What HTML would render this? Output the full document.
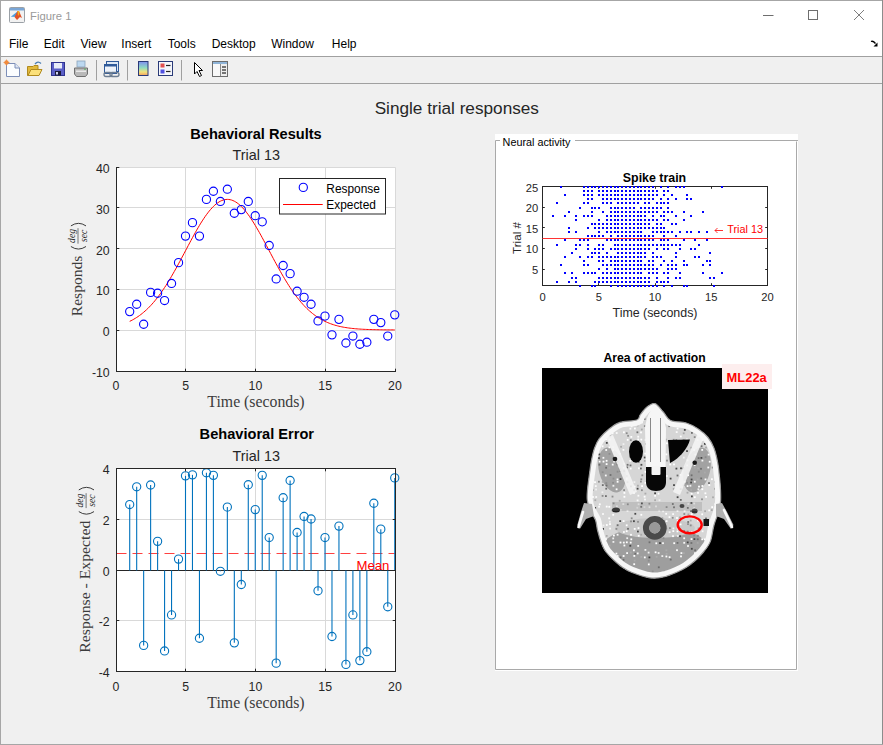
<!DOCTYPE html>
<html><head><meta charset="utf-8"><style>
html,body{margin:0;padding:0;background:#f0f0f0;overflow:hidden}
svg{display:block}
</style></head><body>
<svg width="883" height="745" viewBox="0 0 883 745">
<rect x="0.00" y="0.00" width="883.00" height="745.00" fill="#f0f0f0" />
<rect x="0.00" y="0.00" width="883.00" height="56.00" fill="#ffffff" />
<line x1="0.00" y1="0.50" x2="883.00" y2="0.50" stroke="#a6a6a6" stroke-width="1" />
<line x1="0.50" y1="0.00" x2="0.50" y2="745.00" stroke="#a6a6a6" stroke-width="1" />
<line x1="882.50" y1="0.00" x2="882.50" y2="745.00" stroke="#8c8c8c" stroke-width="1" />
<line x1="0.00" y1="744.50" x2="883.00" y2="744.50" stroke="#a6a6a6" stroke-width="1" />
<text x="30.00" y="20.00" font-size="11.3" text-anchor="start" fill="#9a9a9a" font-weight="normal" font-family='"Liberation Sans", sans-serif' >Figure 1</text>
<g transform="translate(9,7)"><rect x="0.5" y="0.5" width="15" height="15" rx="1" fill="#f2f2f2" stroke="#9aa0a6"/><rect x="1" y="1" width="14" height="2.5" fill="#7aa6d6"/><path d="M1.8 9.8 L8.5 4.5 L9.5 10 Z" fill="#4a9ee0"/><path d="M5.5 10 L8.5 4 L10 4 L13 11 L11 10 L8 13 Z" fill="#e0522a"/><path d="M8.5 4 L10 4 L10.5 7 L9 9 Z" fill="#f5b21a"/></g>
<line x1="763.00" y1="15.50" x2="773.50" y2="15.50" stroke="#6e6e6e" stroke-width="1" />
<rect x="808.5" y="10.5" width="9" height="9" fill="none" stroke="#6e6e6e" stroke-width="1"/>
<line x1="854.00" y1="10.00" x2="864.00" y2="20.00" stroke="#6e6e6e" stroke-width="0.9" />
<line x1="864.00" y1="10.00" x2="854.00" y2="20.00" stroke="#6e6e6e" stroke-width="0.9" />
<text x="9.00" y="47.90" font-size="12" text-anchor="start" fill="#000000" font-weight="normal" font-family='"Liberation Sans", sans-serif' >File</text>
<text x="43.80" y="47.90" font-size="12" text-anchor="start" fill="#000000" font-weight="normal" font-family='"Liberation Sans", sans-serif' >Edit</text>
<text x="80.50" y="47.90" font-size="12" text-anchor="start" fill="#000000" font-weight="normal" font-family='"Liberation Sans", sans-serif' >View</text>
<text x="121.30" y="47.90" font-size="12" text-anchor="start" fill="#000000" font-weight="normal" font-family='"Liberation Sans", sans-serif' >Insert</text>
<text x="167.70" y="47.90" font-size="12" text-anchor="start" fill="#000000" font-weight="normal" font-family='"Liberation Sans", sans-serif' >Tools</text>
<text x="211.70" y="47.90" font-size="12" text-anchor="start" fill="#000000" font-weight="normal" font-family='"Liberation Sans", sans-serif' >Desktop</text>
<text x="271.20" y="47.90" font-size="12" text-anchor="start" fill="#000000" font-weight="normal" font-family='"Liberation Sans", sans-serif' >Window</text>
<text x="331.80" y="47.90" font-size="12" text-anchor="start" fill="#000000" font-weight="normal" font-family='"Liberation Sans", sans-serif' >Help</text>
<path d="M871 41.5 Q873 40.5 875.5 43.5" fill="none" stroke="#000" stroke-width="1.3"/><path d="M873.5 46.5 L877.5 46.5 L877.5 42.5 Z" fill="#000"/>
<line x1="1.00" y1="56.50" x2="882.00" y2="56.50" stroke="#a0a0a0" stroke-width="1" />
<line x1="1.00" y1="83.50" x2="882.00" y2="83.50" stroke="#a0a0a0" stroke-width="1" />
<g>
<!-- new -->
<path d="M6.5 63.5 H15 L19.5 68 V76.5 H6.5 Z" fill="#fbfdff" stroke="#7d8fb8" stroke-width="1"/>
<path d="M15 63.5 V68 H19.5" fill="#dfe7f5" stroke="#7d8fb8" stroke-width="1"/>
<circle cx="6.5" cy="62.5" r="2.2" fill="#f08a3c"/>
<path d="M3.5 62.5 H9.5 M6.5 59.5 V65.5" stroke="#f08a3c" stroke-width="0.8"/>
<!-- open -->
<path d="M27.5 66.5 H33 L34 65.5 H38 V75.5 H27.5 Z" fill="#e2b93b" stroke="#b08a1e" stroke-width="1"/>
<path d="M28 75.5 L31 69.5 H42 L39 75.5 Z" fill="#fbe07a" stroke="#b08a1e" stroke-width="1"/>
<path d="M35 64 Q38 60.5 41 63.5" fill="none" stroke="#4c7fb5" stroke-width="1.3"/>
<!-- save -->
<rect x="51.5" y="62.5" width="13" height="13" fill="#5b5fc7" stroke="#2f3390" stroke-width="1"/>
<rect x="54" y="63" width="8" height="5.5" fill="#e8ecf8"/>
<rect x="55" y="71" width="6" height="4.5" fill="#1c1c3a"/>
<rect x="56" y="72" width="2" height="2.5" fill="#cfd3ef"/>
<!-- print -->
<rect x="77" y="61" width="8" height="6" fill="#bcd8f0" stroke="#8aa4bb" stroke-width="0.8"/>
<path d="M74.5 68 H87.5 V74 L85.5 76.5 H76.5 L74.5 74 Z" fill="#b9b9b9" stroke="#6f6f6f" stroke-width="1"/>
<rect x="76" y="70.5" width="10" height="1.5" fill="#e9e9e9"/>
<circle cx="85" cy="69.3" r="0.7" fill="#3cb34a"/>
<!-- sep -->
<line x1="96.5" y1="60" x2="96.5" y2="80.5" stroke="#a0a0a0"/>
<!-- link -->
<rect x="106.5" y="61.5" width="12" height="10" fill="#dde8f5" stroke="#2f5a9a" stroke-width="1"/>
<rect x="104.5" y="64.5" width="12" height="9" fill="#eef3fa" stroke="#2f5a9a" stroke-width="1"/>
<rect x="104.5" y="64.5" width="12" height="2" fill="#2f5a9a"/>
<rect x="104" y="72.5" width="8" height="4" rx="2" fill="none" stroke="#6d7e92" stroke-width="1.3"/>
<rect x="110" y="72.5" width="9" height="4" rx="2" fill="none" stroke="#6d7e92" stroke-width="1.3"/>
<!-- sep -->
<line x1="127.5" y1="60" x2="127.5" y2="80.5" stroke="#a0a0a0"/>
<!-- colorbar -->
<defs><linearGradient id="cb" x1="0" y1="0" x2="0" y2="1">
<stop offset="0" stop-color="#7f8ff0"/><stop offset="0.45" stop-color="#8fdcc0"/><stop offset="0.75" stop-color="#f3e27a"/><stop offset="1" stop-color="#f0a060"/></linearGradient></defs>
<rect x="138.5" y="61.5" width="9.5" height="14" fill="url(#cb)" stroke="#2a3a78" stroke-width="1"/>
<!-- legend -->
<rect x="158.5" y="61.5" width="14" height="14" fill="#f4f6fb" stroke="#2a3a78" stroke-width="1"/>
<rect x="160.5" y="63.5" width="4" height="4" fill="#e15050"/>
<rect x="160.5" y="69.5" width="4" height="4" fill="#5050e0"/>
<line x1="166" y1="65.5" x2="170.5" y2="65.5" stroke="#222" stroke-width="1.2"/>
<line x1="166" y1="71.5" x2="170.5" y2="71.5" stroke="#222" stroke-width="1.2"/>
<!-- sep -->
<line x1="181.5" y1="60" x2="181.5" y2="80.5" stroke="#a0a0a0"/>
<!-- cursor -->
<path d="M194.5 62.5 V74 L197 71.5 L199.5 76.5 L201.5 75.5 L199 70.5 H202.5 Z" fill="#ffffff" stroke="#000" stroke-width="1" stroke-linejoin="round"/>
<!-- property editor -->
<rect x="212.5" y="61.5" width="15" height="15" fill="#eeeeee" stroke="#6d6d6d" stroke-width="1"/>
<rect x="213" y="62" width="14" height="2" fill="#8fb4d8"/>
<rect x="213" y="64" width="7" height="12" fill="#f8f8f8"/>
<line x1="220.5" y1="64" x2="220.5" y2="76" stroke="#8a8a8a"/>
<line x1="222" y1="67" x2="226" y2="67" stroke="#222" stroke-width="1.2"/>
<line x1="222" y1="70" x2="226" y2="70" stroke="#222" stroke-width="1.2"/>
<line x1="222" y1="73" x2="226" y2="73" stroke="#222" stroke-width="1.2"/>
</g>
<text x="456.80" y="113.80" font-size="17.2" text-anchor="middle" fill="#262626" font-weight="normal" font-family='"Liberation Sans", sans-serif' >Single trial responses</text>
<rect x="116.50" y="167.50" width="279.00" height="204.00" fill="#ffffff" />
<line x1="185.50" y1="167.50" x2="185.50" y2="371.50" stroke="#d9d9d9" stroke-width="1" />
<line x1="255.50" y1="167.50" x2="255.50" y2="371.50" stroke="#d9d9d9" stroke-width="1" />
<line x1="325.50" y1="167.50" x2="325.50" y2="371.50" stroke="#d9d9d9" stroke-width="1" />
<line x1="395.50" y1="167.50" x2="395.50" y2="371.50" stroke="#d9d9d9" stroke-width="1" />
<line x1="116.50" y1="167.50" x2="395.50" y2="167.50" stroke="#d9d9d9" stroke-width="1" />
<line x1="116.50" y1="207.50" x2="395.50" y2="207.50" stroke="#d9d9d9" stroke-width="1" />
<line x1="116.50" y1="248.50" x2="395.50" y2="248.50" stroke="#d9d9d9" stroke-width="1" />
<line x1="116.50" y1="289.50" x2="395.50" y2="289.50" stroke="#d9d9d9" stroke-width="1" />
<line x1="116.50" y1="330.50" x2="395.50" y2="330.50" stroke="#d9d9d9" stroke-width="1" />
<line x1="116.50" y1="167.00" x2="116.50" y2="372.00" stroke="#262626" stroke-width="1" />
<line x1="116.00" y1="371.50" x2="396.00" y2="371.50" stroke="#262626" stroke-width="1" />
<line x1="116.50" y1="371.50" x2="116.50" y2="368.70" stroke="#262626" stroke-width="1" />
<line x1="185.50" y1="371.50" x2="185.50" y2="368.70" stroke="#262626" stroke-width="1" />
<line x1="255.50" y1="371.50" x2="255.50" y2="368.70" stroke="#262626" stroke-width="1" />
<line x1="325.50" y1="371.50" x2="325.50" y2="368.70" stroke="#262626" stroke-width="1" />
<line x1="395.50" y1="371.50" x2="395.50" y2="368.70" stroke="#262626" stroke-width="1" />
<line x1="116.50" y1="167.50" x2="119.30" y2="167.50" stroke="#262626" stroke-width="1" />
<line x1="116.50" y1="207.50" x2="119.30" y2="207.50" stroke="#262626" stroke-width="1" />
<line x1="116.50" y1="248.50" x2="119.30" y2="248.50" stroke="#262626" stroke-width="1" />
<line x1="116.50" y1="289.50" x2="119.30" y2="289.50" stroke="#262626" stroke-width="1" />
<line x1="116.50" y1="330.50" x2="119.30" y2="330.50" stroke="#262626" stroke-width="1" />
<line x1="116.50" y1="371.50" x2="119.30" y2="371.50" stroke="#262626" stroke-width="1" />
<text x="109.70" y="173.00" font-size="12.3" text-anchor="end" fill="#262626" font-weight="normal" font-family='"Liberation Sans", sans-serif' >40</text>
<text x="109.70" y="213.80" font-size="12.3" text-anchor="end" fill="#262626" font-weight="normal" font-family='"Liberation Sans", sans-serif' >30</text>
<text x="109.70" y="254.60" font-size="12.3" text-anchor="end" fill="#262626" font-weight="normal" font-family='"Liberation Sans", sans-serif' >20</text>
<text x="109.70" y="295.40" font-size="12.3" text-anchor="end" fill="#262626" font-weight="normal" font-family='"Liberation Sans", sans-serif' >10</text>
<text x="109.70" y="336.20" font-size="12.3" text-anchor="end" fill="#262626" font-weight="normal" font-family='"Liberation Sans", sans-serif' >0</text>
<text x="109.70" y="377.00" font-size="12.3" text-anchor="end" fill="#262626" font-weight="normal" font-family='"Liberation Sans", sans-serif' >-10</text>
<text x="115.90" y="389.90" font-size="12.3" text-anchor="middle" fill="#262626" font-weight="normal" font-family='"Liberation Sans", sans-serif' >0</text>
<text x="185.65" y="389.90" font-size="12.3" text-anchor="middle" fill="#262626" font-weight="normal" font-family='"Liberation Sans", sans-serif' >5</text>
<text x="255.40" y="389.90" font-size="12.3" text-anchor="middle" fill="#262626" font-weight="normal" font-family='"Liberation Sans", sans-serif' >10</text>
<text x="325.15" y="389.90" font-size="12.3" text-anchor="middle" fill="#262626" font-weight="normal" font-family='"Liberation Sans", sans-serif' >15</text>
<text x="394.90" y="389.90" font-size="12.3" text-anchor="middle" fill="#262626" font-weight="normal" font-family='"Liberation Sans", sans-serif' >20</text>
<text x="256.00" y="138.70" font-size="14.6" text-anchor="middle" fill="#000" font-weight="bold" font-family='"Liberation Sans", sans-serif' >Behavioral Results</text>
<text x="256.30" y="159.90" font-size="14.4" text-anchor="middle" fill="#262626" font-weight="normal" font-family='"Liberation Sans", sans-serif' >Trial 13</text>
<text x="256.00" y="406.80" font-size="15.8" text-anchor="middle" fill="#3c3c3c" font-weight="normal" font-family='"Liberation Serif", serif' >Time (seconds)</text>
<clipPath id="c1"><rect x="116.5" y="167.5" width="279.0" height="204.0"/></clipPath>
<polyline points="129.70,321.37 131.09,320.68 132.49,319.95 133.88,319.17 135.28,318.34 136.68,317.46 138.07,316.54 139.47,315.56 140.86,314.52 142.25,313.43 143.65,312.28 145.04,311.07 146.44,309.81 147.83,308.48 149.23,307.08 150.62,305.63 152.02,304.11 153.42,302.53 154.81,300.88 156.21,299.17 157.60,297.39 159.00,295.55 160.39,293.65 161.78,291.68 163.18,289.65 164.57,287.56 165.97,285.41 167.37,283.21 168.76,280.95 170.16,278.64 171.55,276.28 172.94,273.87 174.34,271.42 175.74,268.93 177.13,266.40 178.53,263.84 179.92,261.26 181.31,258.65 182.71,256.03 184.11,253.40 185.50,250.76 186.90,248.12 188.29,245.49 189.69,242.87 191.08,240.27 192.47,237.69 193.87,235.14 195.26,232.64 196.66,230.17 198.06,227.76 199.45,225.41 200.84,223.12 202.24,220.90 203.64,218.76 205.03,216.70 206.43,214.73 207.82,212.86 209.22,211.09 210.61,209.43 212.00,207.88 213.40,206.45 214.80,205.13 216.19,203.95 217.59,202.90 218.98,201.98 220.38,201.19 221.77,200.55 223.17,200.04 224.56,199.68 225.95,199.46 227.35,199.39 228.75,199.46 230.14,199.68 231.54,200.04 232.93,200.55 234.32,201.19 235.72,201.98 237.11,202.90 238.51,203.95 239.91,205.13 241.30,206.45 242.69,207.88 244.09,209.43 245.49,211.09 246.88,212.86 248.28,214.73 249.67,216.70 251.06,218.76 252.46,220.90 253.85,223.12 255.25,225.41 256.64,227.76 258.04,230.17 259.44,232.64 260.83,235.14 262.23,237.69 263.62,240.27 265.01,242.87 266.41,245.49 267.81,248.12 269.20,250.76 270.60,253.40 271.99,256.03 273.38,258.65 274.78,261.26 276.18,263.84 277.57,266.40 278.97,268.93 280.36,271.42 281.75,273.87 283.15,276.28 284.55,278.64 285.94,280.95 287.34,283.21 288.73,285.41 290.12,287.56 291.52,289.65 292.92,291.68 294.31,293.65 295.70,295.55 297.10,297.39 298.50,299.17 299.89,300.88 301.29,302.53 302.68,304.11 304.07,305.63 305.47,307.08 306.87,308.48 308.26,309.81 309.65,311.07 311.05,312.28 312.45,313.43 313.84,314.52 315.24,315.56 316.63,316.54 318.02,317.46 319.42,318.34 320.81,319.17 322.21,319.95 323.61,320.68 325.00,321.37 326.40,322.02 327.79,322.62 329.19,323.19 330.58,323.72 331.98,324.21 333.37,324.68 334.76,325.11 336.16,325.50 337.56,325.88 338.95,326.22 340.35,326.54 341.74,326.83 343.13,327.11 344.53,327.36 345.93,327.59 347.32,327.81 348.72,328.00 350.11,328.18 351.50,328.35 352.90,328.50 354.30,328.64 355.69,328.77 357.08,328.88 358.48,328.99 359.88,329.08 361.27,329.17 362.67,329.25 364.06,329.32 365.46,329.39 366.85,329.45 368.25,329.50 369.64,329.55 371.03,329.59 372.43,329.63 373.82,329.66 375.22,329.70 376.62,329.72 378.01,329.75 379.41,329.77 380.80,329.79 382.20,329.81 383.59,329.83 384.99,329.84 386.38,329.85 387.77,329.87 389.17,329.88 390.56,329.88 391.96,329.89 393.36,329.90 394.75,329.91" fill="none" stroke="#ff0000" stroke-width="1"/>
<circle cx="129.70" cy="311.59" r="4.1" fill="none" stroke="#0000ff" stroke-width="1.1"/>
<circle cx="136.68" cy="304.25" r="4.1" fill="none" stroke="#0000ff" stroke-width="1.1"/>
<circle cx="143.65" cy="324.24" r="4.1" fill="none" stroke="#0000ff" stroke-width="1.1"/>
<circle cx="150.62" cy="292.41" r="4.1" fill="none" stroke="#0000ff" stroke-width="1.1"/>
<circle cx="157.60" cy="293.23" r="4.1" fill="none" stroke="#0000ff" stroke-width="1.1"/>
<circle cx="164.57" cy="300.57" r="4.1" fill="none" stroke="#0000ff" stroke-width="1.1"/>
<circle cx="171.55" cy="283.44" r="4.1" fill="none" stroke="#0000ff" stroke-width="1.1"/>
<circle cx="178.53" cy="262.63" r="4.1" fill="none" stroke="#0000ff" stroke-width="1.1"/>
<circle cx="185.50" cy="236.11" r="4.1" fill="none" stroke="#0000ff" stroke-width="1.1"/>
<circle cx="192.47" cy="222.65" r="4.1" fill="none" stroke="#0000ff" stroke-width="1.1"/>
<circle cx="199.45" cy="236.11" r="4.1" fill="none" stroke="#0000ff" stroke-width="1.1"/>
<circle cx="206.43" cy="199.39" r="4.1" fill="none" stroke="#0000ff" stroke-width="1.1"/>
<circle cx="213.40" cy="191.23" r="4.1" fill="none" stroke="#0000ff" stroke-width="1.1"/>
<circle cx="220.38" cy="201.43" r="4.1" fill="none" stroke="#0000ff" stroke-width="1.1"/>
<circle cx="227.35" cy="189.19" r="4.1" fill="none" stroke="#0000ff" stroke-width="1.1"/>
<circle cx="234.32" cy="213.26" r="4.1" fill="none" stroke="#0000ff" stroke-width="1.1"/>
<circle cx="241.30" cy="209.59" r="4.1" fill="none" stroke="#0000ff" stroke-width="1.1"/>
<circle cx="248.28" cy="201.43" r="4.1" fill="none" stroke="#0000ff" stroke-width="1.1"/>
<circle cx="255.25" cy="215.71" r="4.1" fill="none" stroke="#0000ff" stroke-width="1.1"/>
<circle cx="262.23" cy="221.83" r="4.1" fill="none" stroke="#0000ff" stroke-width="1.1"/>
<circle cx="269.20" cy="245.49" r="4.1" fill="none" stroke="#0000ff" stroke-width="1.1"/>
<circle cx="276.18" cy="278.95" r="4.1" fill="none" stroke="#0000ff" stroke-width="1.1"/>
<circle cx="283.15" cy="265.49" r="4.1" fill="none" stroke="#0000ff" stroke-width="1.1"/>
<circle cx="290.12" cy="273.65" r="4.1" fill="none" stroke="#0000ff" stroke-width="1.1"/>
<circle cx="297.10" cy="291.19" r="4.1" fill="none" stroke="#0000ff" stroke-width="1.1"/>
<circle cx="304.07" cy="297.31" r="4.1" fill="none" stroke="#0000ff" stroke-width="1.1"/>
<circle cx="311.05" cy="304.25" r="4.1" fill="none" stroke="#0000ff" stroke-width="1.1"/>
<circle cx="318.02" cy="320.97" r="4.1" fill="none" stroke="#0000ff" stroke-width="1.1"/>
<circle cx="325.00" cy="316.08" r="4.1" fill="none" stroke="#0000ff" stroke-width="1.1"/>
<circle cx="331.98" cy="334.85" r="4.1" fill="none" stroke="#0000ff" stroke-width="1.1"/>
<circle cx="338.95" cy="319.34" r="4.1" fill="none" stroke="#0000ff" stroke-width="1.1"/>
<circle cx="345.93" cy="343.01" r="4.1" fill="none" stroke="#0000ff" stroke-width="1.1"/>
<circle cx="352.90" cy="336.07" r="4.1" fill="none" stroke="#0000ff" stroke-width="1.1"/>
<circle cx="359.88" cy="344.23" r="4.1" fill="none" stroke="#0000ff" stroke-width="1.1"/>
<circle cx="366.85" cy="342.19" r="4.1" fill="none" stroke="#0000ff" stroke-width="1.1"/>
<circle cx="373.82" cy="319.34" r="4.1" fill="none" stroke="#0000ff" stroke-width="1.1"/>
<circle cx="380.80" cy="322.61" r="4.1" fill="none" stroke="#0000ff" stroke-width="1.1"/>
<circle cx="387.77" cy="336.07" r="4.1" fill="none" stroke="#0000ff" stroke-width="1.1"/>
<circle cx="394.75" cy="314.85" r="4.1" fill="none" stroke="#0000ff" stroke-width="1.1"/>
<rect x="279.5" y="178.5" width="106" height="35.5" fill="#ffffff" stroke="#262626" stroke-width="1"/>
<circle cx="303.3" cy="187.4" r="4.1" fill="none" stroke="#0000ff" stroke-width="1.1"/>
<line x1="283.00" y1="204.50" x2="322.70" y2="204.50" stroke="#ff0000" stroke-width="1" />
<text x="326.30" y="192.80" font-size="11.9" text-anchor="start" fill="#000" font-weight="normal" font-family='"Liberation Sans", sans-serif' >Response</text>
<text x="326.30" y="208.70" font-size="11.9" text-anchor="start" fill="#000" font-weight="normal" font-family='"Liberation Sans", sans-serif' >Expected</text>
<g transform="translate(82,316.2) rotate(-90)">
<text x="0" y="0" font-size="15.6" fill="#3c3c3c" font-family='"Liberation Serif", serif' textLength="60.5" lengthAdjust="spacingAndGlyphs">Responds</text>
<path d="M69.70 -11.10 Q64.58 -3.55 69.70 4.00" fill="none" stroke="#262626" stroke-width="0.9"/>
<path d="M90.30 -11.10 Q95.42 -3.55 90.30 4.00" fill="none" stroke="#262626" stroke-width="0.9"/>
<line x1="72.50" y1="-4.00" x2="88.00" y2="-4.00" stroke="#555" stroke-width="0.8"/>
<text x="80.25" y="-7.20" font-size="9.6" text-anchor="middle" fill="#262626" font-style="italic" font-family='"Liberation Serif", serif'>deg</text>
<text x="80.25" y="4.80" font-size="9.6" text-anchor="middle" fill="#262626" font-style="italic" font-family='"Liberation Serif", serif'>sec</text>
</g>
<rect x="116.50" y="468.50" width="279.00" height="203.00" fill="#ffffff" />
<line x1="185.50" y1="468.50" x2="185.50" y2="671.50" stroke="#d9d9d9" stroke-width="1" />
<line x1="255.50" y1="468.50" x2="255.50" y2="671.50" stroke="#d9d9d9" stroke-width="1" />
<line x1="325.50" y1="468.50" x2="325.50" y2="671.50" stroke="#d9d9d9" stroke-width="1" />
<line x1="116.50" y1="519.50" x2="395.50" y2="519.50" stroke="#d9d9d9" stroke-width="1" />
<line x1="116.50" y1="620.50" x2="395.50" y2="620.50" stroke="#d9d9d9" stroke-width="1" />
<line x1="116.50" y1="553.50" x2="395.50" y2="553.50" stroke="#ff4040" stroke-width="1" stroke-dasharray="10 6"/>
<line x1="116.50" y1="570.50" x2="395.50" y2="570.50" stroke="#262626" stroke-width="1" />
<line x1="129.70" y1="570.50" x2="129.70" y2="504.54" stroke="#0072bd" stroke-width="1.1" />
<line x1="136.68" y1="570.50" x2="136.68" y2="486.78" stroke="#0072bd" stroke-width="1.1" />
<line x1="143.65" y1="570.50" x2="143.65" y2="645.38" stroke="#0072bd" stroke-width="1.1" />
<line x1="150.62" y1="570.50" x2="150.62" y2="485.00" stroke="#0072bd" stroke-width="1.1" />
<line x1="157.60" y1="570.50" x2="157.60" y2="541.34" stroke="#0072bd" stroke-width="1.1" />
<line x1="164.57" y1="570.50" x2="164.57" y2="650.96" stroke="#0072bd" stroke-width="1.1" />
<line x1="171.55" y1="570.50" x2="171.55" y2="614.92" stroke="#0072bd" stroke-width="1.1" />
<line x1="178.53" y1="570.50" x2="178.53" y2="559.10" stroke="#0072bd" stroke-width="1.1" />
<line x1="185.50" y1="570.50" x2="185.50" y2="475.87" stroke="#0072bd" stroke-width="1.1" />
<line x1="192.47" y1="570.50" x2="192.47" y2="474.86" stroke="#0072bd" stroke-width="1.1" />
<line x1="199.45" y1="570.50" x2="199.45" y2="638.27" stroke="#0072bd" stroke-width="1.1" />
<line x1="206.43" y1="570.50" x2="206.43" y2="472.82" stroke="#0072bd" stroke-width="1.1" />
<line x1="213.40" y1="570.50" x2="213.40" y2="475.36" stroke="#0072bd" stroke-width="1.1" />
<line x1="220.38" y1="570.50" x2="220.38" y2="571.28" stroke="#0072bd" stroke-width="1.1" />
<line x1="227.35" y1="570.50" x2="227.35" y2="507.08" stroke="#0072bd" stroke-width="1.1" />
<line x1="234.32" y1="570.50" x2="234.32" y2="642.84" stroke="#0072bd" stroke-width="1.1" />
<line x1="241.30" y1="570.50" x2="241.30" y2="584.48" stroke="#0072bd" stroke-width="1.1" />
<line x1="248.28" y1="570.50" x2="248.28" y2="484.75" stroke="#0072bd" stroke-width="1.1" />
<line x1="255.25" y1="570.50" x2="255.25" y2="509.62" stroke="#0072bd" stroke-width="1.1" />
<line x1="262.23" y1="570.50" x2="262.23" y2="475.36" stroke="#0072bd" stroke-width="1.1" />
<line x1="269.20" y1="570.50" x2="269.20" y2="537.53" stroke="#0072bd" stroke-width="1.1" />
<line x1="276.18" y1="570.50" x2="276.18" y2="663.14" stroke="#0072bd" stroke-width="1.1" />
<line x1="283.15" y1="570.50" x2="283.15" y2="497.69" stroke="#0072bd" stroke-width="1.1" />
<line x1="290.12" y1="570.50" x2="290.12" y2="480.44" stroke="#0072bd" stroke-width="1.1" />
<line x1="297.10" y1="570.50" x2="297.10" y2="532.46" stroke="#0072bd" stroke-width="1.1" />
<line x1="304.07" y1="570.50" x2="304.07" y2="516.47" stroke="#0072bd" stroke-width="1.1" />
<line x1="311.05" y1="570.50" x2="311.05" y2="519.01" stroke="#0072bd" stroke-width="1.1" />
<line x1="318.02" y1="570.50" x2="318.02" y2="590.82" stroke="#0072bd" stroke-width="1.1" />
<line x1="325.00" y1="570.50" x2="325.00" y2="537.53" stroke="#0072bd" stroke-width="1.1" />
<line x1="331.98" y1="570.50" x2="331.98" y2="636.49" stroke="#0072bd" stroke-width="1.1" />
<line x1="338.95" y1="570.50" x2="338.95" y2="526.11" stroke="#0072bd" stroke-width="1.1" />
<line x1="345.93" y1="570.50" x2="345.93" y2="664.41" stroke="#0072bd" stroke-width="1.1" />
<line x1="352.90" y1="570.50" x2="352.90" y2="614.92" stroke="#0072bd" stroke-width="1.1" />
<line x1="359.88" y1="570.50" x2="359.88" y2="660.60" stroke="#0072bd" stroke-width="1.1" />
<line x1="366.85" y1="570.50" x2="366.85" y2="651.72" stroke="#0072bd" stroke-width="1.1" />
<line x1="373.82" y1="570.50" x2="373.82" y2="503.27" stroke="#0072bd" stroke-width="1.1" />
<line x1="380.80" y1="570.50" x2="380.80" y2="529.16" stroke="#0072bd" stroke-width="1.1" />
<line x1="387.77" y1="570.50" x2="387.77" y2="606.81" stroke="#0072bd" stroke-width="1.1" />
<line x1="394.75" y1="570.50" x2="394.75" y2="477.90" stroke="#0072bd" stroke-width="1.1" />
<circle cx="129.70" cy="504.54" r="4.1" fill="none" stroke="#0072bd" stroke-width="1.1"/>
<circle cx="136.68" cy="486.78" r="4.1" fill="none" stroke="#0072bd" stroke-width="1.1"/>
<circle cx="143.65" cy="645.38" r="4.1" fill="none" stroke="#0072bd" stroke-width="1.1"/>
<circle cx="150.62" cy="485.00" r="4.1" fill="none" stroke="#0072bd" stroke-width="1.1"/>
<circle cx="157.60" cy="541.34" r="4.1" fill="none" stroke="#0072bd" stroke-width="1.1"/>
<circle cx="164.57" cy="650.96" r="4.1" fill="none" stroke="#0072bd" stroke-width="1.1"/>
<circle cx="171.55" cy="614.92" r="4.1" fill="none" stroke="#0072bd" stroke-width="1.1"/>
<circle cx="178.53" cy="559.10" r="4.1" fill="none" stroke="#0072bd" stroke-width="1.1"/>
<circle cx="185.50" cy="475.87" r="4.1" fill="none" stroke="#0072bd" stroke-width="1.1"/>
<circle cx="192.47" cy="474.86" r="4.1" fill="none" stroke="#0072bd" stroke-width="1.1"/>
<circle cx="199.45" cy="638.27" r="4.1" fill="none" stroke="#0072bd" stroke-width="1.1"/>
<circle cx="206.43" cy="472.82" r="4.1" fill="none" stroke="#0072bd" stroke-width="1.1"/>
<circle cx="213.40" cy="475.36" r="4.1" fill="none" stroke="#0072bd" stroke-width="1.1"/>
<circle cx="220.38" cy="571.28" r="4.1" fill="none" stroke="#0072bd" stroke-width="1.1"/>
<circle cx="227.35" cy="507.08" r="4.1" fill="none" stroke="#0072bd" stroke-width="1.1"/>
<circle cx="234.32" cy="642.84" r="4.1" fill="none" stroke="#0072bd" stroke-width="1.1"/>
<circle cx="241.30" cy="584.48" r="4.1" fill="none" stroke="#0072bd" stroke-width="1.1"/>
<circle cx="248.28" cy="484.75" r="4.1" fill="none" stroke="#0072bd" stroke-width="1.1"/>
<circle cx="255.25" cy="509.62" r="4.1" fill="none" stroke="#0072bd" stroke-width="1.1"/>
<circle cx="262.23" cy="475.36" r="4.1" fill="none" stroke="#0072bd" stroke-width="1.1"/>
<circle cx="269.20" cy="537.53" r="4.1" fill="none" stroke="#0072bd" stroke-width="1.1"/>
<circle cx="276.18" cy="663.14" r="4.1" fill="none" stroke="#0072bd" stroke-width="1.1"/>
<circle cx="283.15" cy="497.69" r="4.1" fill="none" stroke="#0072bd" stroke-width="1.1"/>
<circle cx="290.12" cy="480.44" r="4.1" fill="none" stroke="#0072bd" stroke-width="1.1"/>
<circle cx="297.10" cy="532.46" r="4.1" fill="none" stroke="#0072bd" stroke-width="1.1"/>
<circle cx="304.07" cy="516.47" r="4.1" fill="none" stroke="#0072bd" stroke-width="1.1"/>
<circle cx="311.05" cy="519.01" r="4.1" fill="none" stroke="#0072bd" stroke-width="1.1"/>
<circle cx="318.02" cy="590.82" r="4.1" fill="none" stroke="#0072bd" stroke-width="1.1"/>
<circle cx="325.00" cy="537.53" r="4.1" fill="none" stroke="#0072bd" stroke-width="1.1"/>
<circle cx="331.98" cy="636.49" r="4.1" fill="none" stroke="#0072bd" stroke-width="1.1"/>
<circle cx="338.95" cy="526.11" r="4.1" fill="none" stroke="#0072bd" stroke-width="1.1"/>
<circle cx="345.93" cy="664.41" r="4.1" fill="none" stroke="#0072bd" stroke-width="1.1"/>
<circle cx="352.90" cy="614.92" r="4.1" fill="none" stroke="#0072bd" stroke-width="1.1"/>
<circle cx="359.88" cy="660.60" r="4.1" fill="none" stroke="#0072bd" stroke-width="1.1"/>
<circle cx="366.85" cy="651.72" r="4.1" fill="none" stroke="#0072bd" stroke-width="1.1"/>
<circle cx="373.82" cy="503.27" r="4.1" fill="none" stroke="#0072bd" stroke-width="1.1"/>
<circle cx="380.80" cy="529.16" r="4.1" fill="none" stroke="#0072bd" stroke-width="1.1"/>
<circle cx="387.77" cy="606.81" r="4.1" fill="none" stroke="#0072bd" stroke-width="1.1"/>
<circle cx="394.75" cy="477.90" r="4.1" fill="none" stroke="#0072bd" stroke-width="1.1"/>
<text x="356.40" y="569.60" font-size="13.2" text-anchor="start" fill="#ff0000" font-weight="normal" font-family='"Liberation Sans", sans-serif' >Mean</text>
<rect x="116.5" y="468.5" width="279.0" height="203.0" fill="none" stroke="#262626" stroke-width="1"/>
<line x1="116.50" y1="671.50" x2="116.50" y2="668.70" stroke="#262626" stroke-width="1" />
<line x1="116.50" y1="468.50" x2="116.50" y2="471.30" stroke="#262626" stroke-width="1" />
<line x1="185.50" y1="671.50" x2="185.50" y2="668.70" stroke="#262626" stroke-width="1" />
<line x1="185.50" y1="468.50" x2="185.50" y2="471.30" stroke="#262626" stroke-width="1" />
<line x1="255.50" y1="671.50" x2="255.50" y2="668.70" stroke="#262626" stroke-width="1" />
<line x1="255.50" y1="468.50" x2="255.50" y2="471.30" stroke="#262626" stroke-width="1" />
<line x1="325.50" y1="671.50" x2="325.50" y2="668.70" stroke="#262626" stroke-width="1" />
<line x1="325.50" y1="468.50" x2="325.50" y2="471.30" stroke="#262626" stroke-width="1" />
<line x1="395.50" y1="671.50" x2="395.50" y2="668.70" stroke="#262626" stroke-width="1" />
<line x1="395.50" y1="468.50" x2="395.50" y2="471.30" stroke="#262626" stroke-width="1" />
<line x1="116.50" y1="468.50" x2="119.30" y2="468.50" stroke="#262626" stroke-width="1" />
<line x1="395.50" y1="468.50" x2="392.70" y2="468.50" stroke="#262626" stroke-width="1" />
<text x="109.70" y="474.00" font-size="12.3" text-anchor="end" fill="#262626" font-weight="normal" font-family='"Liberation Sans", sans-serif' >4</text>
<line x1="116.50" y1="519.50" x2="119.30" y2="519.50" stroke="#262626" stroke-width="1" />
<line x1="395.50" y1="519.50" x2="392.70" y2="519.50" stroke="#262626" stroke-width="1" />
<text x="109.70" y="524.75" font-size="12.3" text-anchor="end" fill="#262626" font-weight="normal" font-family='"Liberation Sans", sans-serif' >2</text>
<line x1="116.50" y1="570.50" x2="119.30" y2="570.50" stroke="#262626" stroke-width="1" />
<line x1="395.50" y1="570.50" x2="392.70" y2="570.50" stroke="#262626" stroke-width="1" />
<text x="109.70" y="575.50" font-size="12.3" text-anchor="end" fill="#262626" font-weight="normal" font-family='"Liberation Sans", sans-serif' >0</text>
<line x1="116.50" y1="620.50" x2="119.30" y2="620.50" stroke="#262626" stroke-width="1" />
<line x1="395.50" y1="620.50" x2="392.70" y2="620.50" stroke="#262626" stroke-width="1" />
<text x="109.70" y="626.25" font-size="12.3" text-anchor="end" fill="#262626" font-weight="normal" font-family='"Liberation Sans", sans-serif' >-2</text>
<line x1="116.50" y1="671.50" x2="119.30" y2="671.50" stroke="#262626" stroke-width="1" />
<line x1="395.50" y1="671.50" x2="392.70" y2="671.50" stroke="#262626" stroke-width="1" />
<text x="109.70" y="677.00" font-size="12.3" text-anchor="end" fill="#262626" font-weight="normal" font-family='"Liberation Sans", sans-serif' >-4</text>
<text x="115.90" y="691.20" font-size="12.3" text-anchor="middle" fill="#262626" font-weight="normal" font-family='"Liberation Sans", sans-serif' >0</text>
<text x="185.65" y="691.20" font-size="12.3" text-anchor="middle" fill="#262626" font-weight="normal" font-family='"Liberation Sans", sans-serif' >5</text>
<text x="255.40" y="691.20" font-size="12.3" text-anchor="middle" fill="#262626" font-weight="normal" font-family='"Liberation Sans", sans-serif' >10</text>
<text x="325.15" y="691.20" font-size="12.3" text-anchor="middle" fill="#262626" font-weight="normal" font-family='"Liberation Sans", sans-serif' >15</text>
<text x="394.90" y="691.20" font-size="12.3" text-anchor="middle" fill="#262626" font-weight="normal" font-family='"Liberation Sans", sans-serif' >20</text>
<text x="256.80" y="438.70" font-size="14.6" text-anchor="middle" fill="#000" font-weight="bold" font-family='"Liberation Sans", sans-serif' >Behavioral Error</text>
<text x="256.30" y="460.80" font-size="14.4" text-anchor="middle" fill="#262626" font-weight="normal" font-family='"Liberation Sans", sans-serif' >Trial 13</text>
<text x="256.00" y="707.90" font-size="15.8" text-anchor="middle" fill="#3c3c3c" font-weight="normal" font-family='"Liberation Serif", serif' >Time (seconds)</text>
<g transform="translate(89.7,652.7) rotate(-90)">
<text x="0" y="0" font-size="15.6" fill="#3c3c3c" font-family='"Liberation Serif", serif' textLength="132" lengthAdjust="spacingAndGlyphs">Response - Expected</text>
<path d="M141.10 -10.90 Q135.98 -3.30 141.10 4.30" fill="none" stroke="#262626" stroke-width="0.9"/>
<path d="M162.80 -10.90 Q167.92 -3.30 162.80 4.30" fill="none" stroke="#262626" stroke-width="0.9"/>
<line x1="144.60" y1="-3.60" x2="159.50" y2="-3.60" stroke="#555" stroke-width="0.8"/>
<text x="152.05" y="-6.80" font-size="9.6" text-anchor="middle" fill="#262626" font-style="italic" font-family='"Liberation Serif", serif'>deg</text>
<text x="152.05" y="5.20" font-size="9.6" text-anchor="middle" fill="#262626" font-style="italic" font-family='"Liberation Serif", serif'>sec</text>
</g>
<rect x="495.00" y="134.00" width="303.00" height="537.00" fill="#ffffff" />
<path d="M500 140.5 H495.5 V669.5 H796.5 V141.5" fill="none" stroke="#a9a9a9" stroke-width="1"/>
<line x1="575.00" y1="140.50" x2="798.00" y2="140.50" stroke="#a9a9a9" stroke-width="1" />
<text x="502.60" y="146.30" font-size="10.8" text-anchor="start" fill="#000" font-weight="normal" font-family='"Liberation Sans", sans-serif' >Neural activity</text>
<rect x="542.5" y="186.5" width="225.0" height="99.0" fill="none" stroke="#262626" stroke-width="1"/>
<line x1="542.50" y1="285.50" x2="542.50" y2="283.20" stroke="#262626" stroke-width="1" />
<line x1="542.50" y1="186.50" x2="542.50" y2="188.80" stroke="#262626" stroke-width="1" />
<text x="542.50" y="301.20" font-size="11.2" text-anchor="middle" fill="#262626" font-weight="normal" font-family='"Liberation Sans", sans-serif' >0</text>
<line x1="598.50" y1="285.50" x2="598.50" y2="283.20" stroke="#262626" stroke-width="1" />
<line x1="598.50" y1="186.50" x2="598.50" y2="188.80" stroke="#262626" stroke-width="1" />
<text x="598.75" y="301.20" font-size="11.2" text-anchor="middle" fill="#262626" font-weight="normal" font-family='"Liberation Sans", sans-serif' >5</text>
<line x1="655.50" y1="285.50" x2="655.50" y2="283.20" stroke="#262626" stroke-width="1" />
<line x1="655.50" y1="186.50" x2="655.50" y2="188.80" stroke="#262626" stroke-width="1" />
<text x="655.00" y="301.20" font-size="11.2" text-anchor="middle" fill="#262626" font-weight="normal" font-family='"Liberation Sans", sans-serif' >10</text>
<line x1="711.50" y1="285.50" x2="711.50" y2="283.20" stroke="#262626" stroke-width="1" />
<line x1="711.50" y1="186.50" x2="711.50" y2="188.80" stroke="#262626" stroke-width="1" />
<text x="711.25" y="301.20" font-size="11.2" text-anchor="middle" fill="#262626" font-weight="normal" font-family='"Liberation Sans", sans-serif' >15</text>
<line x1="767.50" y1="285.50" x2="767.50" y2="283.20" stroke="#262626" stroke-width="1" />
<line x1="767.50" y1="186.50" x2="767.50" y2="188.80" stroke="#262626" stroke-width="1" />
<text x="767.50" y="301.20" font-size="11.2" text-anchor="middle" fill="#262626" font-weight="normal" font-family='"Liberation Sans", sans-serif' >20</text>
<line x1="542.50" y1="269.50" x2="544.80" y2="269.50" stroke="#262626" stroke-width="1" />
<line x1="767.50" y1="269.50" x2="765.20" y2="269.50" stroke="#262626" stroke-width="1" />
<text x="538.30" y="274.10" font-size="11.2" text-anchor="end" fill="#262626" font-weight="normal" font-family='"Liberation Sans", sans-serif' >5</text>
<line x1="542.50" y1="248.50" x2="544.80" y2="248.50" stroke="#262626" stroke-width="1" />
<line x1="767.50" y1="248.50" x2="765.20" y2="248.50" stroke="#262626" stroke-width="1" />
<text x="538.30" y="253.47" font-size="11.2" text-anchor="end" fill="#262626" font-weight="normal" font-family='"Liberation Sans", sans-serif' >10</text>
<line x1="542.50" y1="227.50" x2="544.80" y2="227.50" stroke="#262626" stroke-width="1" />
<line x1="767.50" y1="227.50" x2="765.20" y2="227.50" stroke="#262626" stroke-width="1" />
<text x="538.30" y="232.85" font-size="11.2" text-anchor="end" fill="#262626" font-weight="normal" font-family='"Liberation Sans", sans-serif' >15</text>
<line x1="542.50" y1="207.50" x2="544.80" y2="207.50" stroke="#262626" stroke-width="1" />
<line x1="767.50" y1="207.50" x2="765.20" y2="207.50" stroke="#262626" stroke-width="1" />
<text x="538.30" y="212.22" font-size="11.2" text-anchor="end" fill="#262626" font-weight="normal" font-family='"Liberation Sans", sans-serif' >20</text>
<line x1="542.50" y1="186.50" x2="544.80" y2="186.50" stroke="#262626" stroke-width="1" />
<line x1="767.50" y1="186.50" x2="765.20" y2="186.50" stroke="#262626" stroke-width="1" />
<text x="538.30" y="191.60" font-size="11.2" text-anchor="end" fill="#262626" font-weight="normal" font-family='"Liberation Sans", sans-serif' >25</text>
<rect x="560" y="186" width="2" height="2" fill="#0000ff"/>
<rect x="583" y="186" width="2" height="2" fill="#0000ff"/>
<rect x="587" y="186" width="2" height="2" fill="#0000ff"/>
<rect x="591" y="186" width="2" height="2" fill="#0000ff"/>
<rect x="594" y="186" width="2" height="2" fill="#0000ff"/>
<rect x="598" y="186" width="2" height="2" fill="#0000ff"/>
<rect x="602" y="186" width="2" height="2" fill="#0000ff"/>
<rect x="606" y="186" width="2" height="2" fill="#0000ff"/>
<rect x="610" y="186" width="2" height="2" fill="#0000ff"/>
<rect x="614" y="186" width="2" height="2" fill="#0000ff"/>
<rect x="617" y="186" width="2" height="2" fill="#0000ff"/>
<rect x="621" y="186" width="2" height="2" fill="#0000ff"/>
<rect x="625" y="186" width="2" height="2" fill="#0000ff"/>
<rect x="629" y="186" width="2" height="2" fill="#0000ff"/>
<rect x="633" y="186" width="2" height="2" fill="#0000ff"/>
<rect x="637" y="186" width="2" height="2" fill="#0000ff"/>
<rect x="640" y="186" width="2" height="2" fill="#0000ff"/>
<rect x="644" y="186" width="2" height="2" fill="#0000ff"/>
<rect x="648" y="186" width="2" height="2" fill="#0000ff"/>
<rect x="652" y="186" width="2" height="2" fill="#0000ff"/>
<rect x="660" y="186" width="2" height="2" fill="#0000ff"/>
<rect x="667" y="186" width="2" height="2" fill="#0000ff"/>
<rect x="675" y="186" width="2" height="2" fill="#0000ff"/>
<rect x="679" y="186" width="2" height="2" fill="#0000ff"/>
<rect x="683" y="186" width="2" height="2" fill="#0000ff"/>
<rect x="721" y="186" width="2" height="2" fill="#0000ff"/>
<rect x="583" y="190" width="2" height="2" fill="#0000ff"/>
<rect x="587" y="190" width="2" height="2" fill="#0000ff"/>
<rect x="591" y="190" width="2" height="2" fill="#0000ff"/>
<rect x="598" y="190" width="2" height="2" fill="#0000ff"/>
<rect x="602" y="190" width="2" height="2" fill="#0000ff"/>
<rect x="606" y="190" width="2" height="2" fill="#0000ff"/>
<rect x="610" y="190" width="2" height="2" fill="#0000ff"/>
<rect x="614" y="190" width="2" height="2" fill="#0000ff"/>
<rect x="617" y="190" width="2" height="2" fill="#0000ff"/>
<rect x="621" y="190" width="2" height="2" fill="#0000ff"/>
<rect x="625" y="190" width="2" height="2" fill="#0000ff"/>
<rect x="629" y="190" width="2" height="2" fill="#0000ff"/>
<rect x="633" y="190" width="2" height="2" fill="#0000ff"/>
<rect x="637" y="190" width="2" height="2" fill="#0000ff"/>
<rect x="640" y="190" width="2" height="2" fill="#0000ff"/>
<rect x="644" y="190" width="2" height="2" fill="#0000ff"/>
<rect x="648" y="190" width="2" height="2" fill="#0000ff"/>
<rect x="652" y="190" width="2" height="2" fill="#0000ff"/>
<rect x="656" y="190" width="2" height="2" fill="#0000ff"/>
<rect x="663" y="190" width="2" height="2" fill="#0000ff"/>
<rect x="667" y="190" width="2" height="2" fill="#0000ff"/>
<rect x="564" y="194" width="2" height="2" fill="#0000ff"/>
<rect x="583" y="194" width="2" height="2" fill="#0000ff"/>
<rect x="587" y="194" width="2" height="2" fill="#0000ff"/>
<rect x="591" y="194" width="2" height="2" fill="#0000ff"/>
<rect x="598" y="194" width="2" height="2" fill="#0000ff"/>
<rect x="602" y="194" width="2" height="2" fill="#0000ff"/>
<rect x="606" y="194" width="2" height="2" fill="#0000ff"/>
<rect x="610" y="194" width="2" height="2" fill="#0000ff"/>
<rect x="614" y="194" width="2" height="2" fill="#0000ff"/>
<rect x="617" y="194" width="2" height="2" fill="#0000ff"/>
<rect x="621" y="194" width="2" height="2" fill="#0000ff"/>
<rect x="625" y="194" width="2" height="2" fill="#0000ff"/>
<rect x="629" y="194" width="2" height="2" fill="#0000ff"/>
<rect x="633" y="194" width="2" height="2" fill="#0000ff"/>
<rect x="637" y="194" width="2" height="2" fill="#0000ff"/>
<rect x="640" y="194" width="2" height="2" fill="#0000ff"/>
<rect x="644" y="194" width="2" height="2" fill="#0000ff"/>
<rect x="648" y="194" width="2" height="2" fill="#0000ff"/>
<rect x="652" y="194" width="2" height="2" fill="#0000ff"/>
<rect x="656" y="194" width="2" height="2" fill="#0000ff"/>
<rect x="663" y="194" width="2" height="2" fill="#0000ff"/>
<rect x="671" y="194" width="2" height="2" fill="#0000ff"/>
<rect x="686" y="194" width="2" height="2" fill="#0000ff"/>
<rect x="587" y="198" width="2" height="2" fill="#0000ff"/>
<rect x="591" y="198" width="2" height="2" fill="#0000ff"/>
<rect x="602" y="198" width="2" height="2" fill="#0000ff"/>
<rect x="606" y="198" width="2" height="2" fill="#0000ff"/>
<rect x="610" y="198" width="2" height="2" fill="#0000ff"/>
<rect x="614" y="198" width="2" height="2" fill="#0000ff"/>
<rect x="617" y="198" width="2" height="2" fill="#0000ff"/>
<rect x="621" y="198" width="2" height="2" fill="#0000ff"/>
<rect x="625" y="198" width="2" height="2" fill="#0000ff"/>
<rect x="629" y="198" width="2" height="2" fill="#0000ff"/>
<rect x="633" y="198" width="2" height="2" fill="#0000ff"/>
<rect x="637" y="198" width="2" height="2" fill="#0000ff"/>
<rect x="640" y="198" width="2" height="2" fill="#0000ff"/>
<rect x="644" y="198" width="2" height="2" fill="#0000ff"/>
<rect x="648" y="198" width="2" height="2" fill="#0000ff"/>
<rect x="652" y="198" width="2" height="2" fill="#0000ff"/>
<rect x="660" y="198" width="2" height="2" fill="#0000ff"/>
<rect x="667" y="198" width="2" height="2" fill="#0000ff"/>
<rect x="675" y="198" width="2" height="2" fill="#0000ff"/>
<rect x="686" y="198" width="2" height="2" fill="#0000ff"/>
<rect x="690" y="198" width="2" height="2" fill="#0000ff"/>
<rect x="556" y="202" width="2" height="2" fill="#0000ff"/>
<rect x="583" y="202" width="2" height="2" fill="#0000ff"/>
<rect x="587" y="202" width="2" height="2" fill="#0000ff"/>
<rect x="602" y="202" width="2" height="2" fill="#0000ff"/>
<rect x="606" y="202" width="2" height="2" fill="#0000ff"/>
<rect x="610" y="202" width="2" height="2" fill="#0000ff"/>
<rect x="617" y="202" width="2" height="2" fill="#0000ff"/>
<rect x="621" y="202" width="2" height="2" fill="#0000ff"/>
<rect x="625" y="202" width="2" height="2" fill="#0000ff"/>
<rect x="629" y="202" width="2" height="2" fill="#0000ff"/>
<rect x="633" y="202" width="2" height="2" fill="#0000ff"/>
<rect x="637" y="202" width="2" height="2" fill="#0000ff"/>
<rect x="644" y="202" width="2" height="2" fill="#0000ff"/>
<rect x="648" y="202" width="2" height="2" fill="#0000ff"/>
<rect x="656" y="202" width="2" height="2" fill="#0000ff"/>
<rect x="660" y="202" width="2" height="2" fill="#0000ff"/>
<rect x="663" y="202" width="2" height="2" fill="#0000ff"/>
<rect x="667" y="202" width="2" height="2" fill="#0000ff"/>
<rect x="579" y="207" width="2" height="2" fill="#0000ff"/>
<rect x="591" y="207" width="2" height="2" fill="#0000ff"/>
<rect x="594" y="207" width="2" height="2" fill="#0000ff"/>
<rect x="598" y="207" width="2" height="2" fill="#0000ff"/>
<rect x="610" y="207" width="2" height="2" fill="#0000ff"/>
<rect x="614" y="207" width="2" height="2" fill="#0000ff"/>
<rect x="617" y="207" width="2" height="2" fill="#0000ff"/>
<rect x="621" y="207" width="2" height="2" fill="#0000ff"/>
<rect x="625" y="207" width="2" height="2" fill="#0000ff"/>
<rect x="629" y="207" width="2" height="2" fill="#0000ff"/>
<rect x="633" y="207" width="2" height="2" fill="#0000ff"/>
<rect x="640" y="207" width="2" height="2" fill="#0000ff"/>
<rect x="644" y="207" width="2" height="2" fill="#0000ff"/>
<rect x="648" y="207" width="2" height="2" fill="#0000ff"/>
<rect x="652" y="207" width="2" height="2" fill="#0000ff"/>
<rect x="656" y="207" width="2" height="2" fill="#0000ff"/>
<rect x="660" y="207" width="2" height="2" fill="#0000ff"/>
<rect x="667" y="207" width="2" height="2" fill="#0000ff"/>
<rect x="568" y="211" width="2" height="2" fill="#0000ff"/>
<rect x="591" y="211" width="2" height="2" fill="#0000ff"/>
<rect x="602" y="211" width="2" height="2" fill="#0000ff"/>
<rect x="610" y="211" width="2" height="2" fill="#0000ff"/>
<rect x="614" y="211" width="2" height="2" fill="#0000ff"/>
<rect x="617" y="211" width="2" height="2" fill="#0000ff"/>
<rect x="621" y="211" width="2" height="2" fill="#0000ff"/>
<rect x="625" y="211" width="2" height="2" fill="#0000ff"/>
<rect x="629" y="211" width="2" height="2" fill="#0000ff"/>
<rect x="633" y="211" width="2" height="2" fill="#0000ff"/>
<rect x="637" y="211" width="2" height="2" fill="#0000ff"/>
<rect x="640" y="211" width="2" height="2" fill="#0000ff"/>
<rect x="644" y="211" width="2" height="2" fill="#0000ff"/>
<rect x="648" y="211" width="2" height="2" fill="#0000ff"/>
<rect x="652" y="211" width="2" height="2" fill="#0000ff"/>
<rect x="656" y="211" width="2" height="2" fill="#0000ff"/>
<rect x="663" y="211" width="2" height="2" fill="#0000ff"/>
<rect x="667" y="211" width="2" height="2" fill="#0000ff"/>
<rect x="671" y="211" width="2" height="2" fill="#0000ff"/>
<rect x="683" y="211" width="2" height="2" fill="#0000ff"/>
<rect x="702" y="211" width="2" height="2" fill="#0000ff"/>
<rect x="552" y="215" width="2" height="2" fill="#0000ff"/>
<rect x="564" y="215" width="2" height="2" fill="#0000ff"/>
<rect x="575" y="215" width="2" height="2" fill="#0000ff"/>
<rect x="583" y="215" width="2" height="2" fill="#0000ff"/>
<rect x="587" y="215" width="2" height="2" fill="#0000ff"/>
<rect x="591" y="215" width="2" height="2" fill="#0000ff"/>
<rect x="606" y="215" width="2" height="2" fill="#0000ff"/>
<rect x="610" y="215" width="2" height="2" fill="#0000ff"/>
<rect x="614" y="215" width="2" height="2" fill="#0000ff"/>
<rect x="617" y="215" width="2" height="2" fill="#0000ff"/>
<rect x="621" y="215" width="2" height="2" fill="#0000ff"/>
<rect x="625" y="215" width="2" height="2" fill="#0000ff"/>
<rect x="629" y="215" width="2" height="2" fill="#0000ff"/>
<rect x="633" y="215" width="2" height="2" fill="#0000ff"/>
<rect x="637" y="215" width="2" height="2" fill="#0000ff"/>
<rect x="640" y="215" width="2" height="2" fill="#0000ff"/>
<rect x="644" y="215" width="2" height="2" fill="#0000ff"/>
<rect x="652" y="215" width="2" height="2" fill="#0000ff"/>
<rect x="660" y="215" width="2" height="2" fill="#0000ff"/>
<rect x="663" y="215" width="2" height="2" fill="#0000ff"/>
<rect x="675" y="215" width="2" height="2" fill="#0000ff"/>
<rect x="690" y="215" width="2" height="2" fill="#0000ff"/>
<rect x="575" y="219" width="2" height="2" fill="#0000ff"/>
<rect x="598" y="219" width="2" height="2" fill="#0000ff"/>
<rect x="606" y="219" width="2" height="2" fill="#0000ff"/>
<rect x="610" y="219" width="2" height="2" fill="#0000ff"/>
<rect x="614" y="219" width="2" height="2" fill="#0000ff"/>
<rect x="617" y="219" width="2" height="2" fill="#0000ff"/>
<rect x="621" y="219" width="2" height="2" fill="#0000ff"/>
<rect x="625" y="219" width="2" height="2" fill="#0000ff"/>
<rect x="629" y="219" width="2" height="2" fill="#0000ff"/>
<rect x="633" y="219" width="2" height="2" fill="#0000ff"/>
<rect x="637" y="219" width="2" height="2" fill="#0000ff"/>
<rect x="640" y="219" width="2" height="2" fill="#0000ff"/>
<rect x="644" y="219" width="2" height="2" fill="#0000ff"/>
<rect x="648" y="219" width="2" height="2" fill="#0000ff"/>
<rect x="652" y="219" width="2" height="2" fill="#0000ff"/>
<rect x="656" y="219" width="2" height="2" fill="#0000ff"/>
<rect x="663" y="219" width="2" height="2" fill="#0000ff"/>
<rect x="667" y="219" width="2" height="2" fill="#0000ff"/>
<rect x="683" y="219" width="2" height="2" fill="#0000ff"/>
<rect x="591" y="223" width="2" height="2" fill="#0000ff"/>
<rect x="594" y="223" width="2" height="2" fill="#0000ff"/>
<rect x="598" y="223" width="2" height="2" fill="#0000ff"/>
<rect x="602" y="223" width="2" height="2" fill="#0000ff"/>
<rect x="606" y="223" width="2" height="2" fill="#0000ff"/>
<rect x="610" y="223" width="2" height="2" fill="#0000ff"/>
<rect x="614" y="223" width="2" height="2" fill="#0000ff"/>
<rect x="617" y="223" width="2" height="2" fill="#0000ff"/>
<rect x="621" y="223" width="2" height="2" fill="#0000ff"/>
<rect x="625" y="223" width="2" height="2" fill="#0000ff"/>
<rect x="629" y="223" width="2" height="2" fill="#0000ff"/>
<rect x="633" y="223" width="2" height="2" fill="#0000ff"/>
<rect x="637" y="223" width="2" height="2" fill="#0000ff"/>
<rect x="640" y="223" width="2" height="2" fill="#0000ff"/>
<rect x="644" y="223" width="2" height="2" fill="#0000ff"/>
<rect x="648" y="223" width="2" height="2" fill="#0000ff"/>
<rect x="656" y="223" width="2" height="2" fill="#0000ff"/>
<rect x="660" y="223" width="2" height="2" fill="#0000ff"/>
<rect x="671" y="223" width="2" height="2" fill="#0000ff"/>
<rect x="675" y="223" width="2" height="2" fill="#0000ff"/>
<rect x="568" y="227" width="2" height="2" fill="#0000ff"/>
<rect x="587" y="227" width="2" height="2" fill="#0000ff"/>
<rect x="594" y="227" width="2" height="2" fill="#0000ff"/>
<rect x="598" y="227" width="2" height="2" fill="#0000ff"/>
<rect x="602" y="227" width="2" height="2" fill="#0000ff"/>
<rect x="606" y="227" width="2" height="2" fill="#0000ff"/>
<rect x="610" y="227" width="2" height="2" fill="#0000ff"/>
<rect x="614" y="227" width="2" height="2" fill="#0000ff"/>
<rect x="617" y="227" width="2" height="2" fill="#0000ff"/>
<rect x="621" y="227" width="2" height="2" fill="#0000ff"/>
<rect x="625" y="227" width="2" height="2" fill="#0000ff"/>
<rect x="629" y="227" width="2" height="2" fill="#0000ff"/>
<rect x="633" y="227" width="2" height="2" fill="#0000ff"/>
<rect x="637" y="227" width="2" height="2" fill="#0000ff"/>
<rect x="640" y="227" width="2" height="2" fill="#0000ff"/>
<rect x="644" y="227" width="2" height="2" fill="#0000ff"/>
<rect x="648" y="227" width="2" height="2" fill="#0000ff"/>
<rect x="652" y="227" width="2" height="2" fill="#0000ff"/>
<rect x="656" y="227" width="2" height="2" fill="#0000ff"/>
<rect x="660" y="227" width="2" height="2" fill="#0000ff"/>
<rect x="663" y="227" width="2" height="2" fill="#0000ff"/>
<rect x="568" y="231" width="2" height="2" fill="#0000ff"/>
<rect x="575" y="231" width="2" height="2" fill="#0000ff"/>
<rect x="598" y="231" width="2" height="2" fill="#0000ff"/>
<rect x="606" y="231" width="2" height="2" fill="#0000ff"/>
<rect x="610" y="231" width="2" height="2" fill="#0000ff"/>
<rect x="614" y="231" width="2" height="2" fill="#0000ff"/>
<rect x="617" y="231" width="2" height="2" fill="#0000ff"/>
<rect x="621" y="231" width="2" height="2" fill="#0000ff"/>
<rect x="625" y="231" width="2" height="2" fill="#0000ff"/>
<rect x="629" y="231" width="2" height="2" fill="#0000ff"/>
<rect x="633" y="231" width="2" height="2" fill="#0000ff"/>
<rect x="637" y="231" width="2" height="2" fill="#0000ff"/>
<rect x="640" y="231" width="2" height="2" fill="#0000ff"/>
<rect x="652" y="231" width="2" height="2" fill="#0000ff"/>
<rect x="656" y="231" width="2" height="2" fill="#0000ff"/>
<rect x="660" y="231" width="2" height="2" fill="#0000ff"/>
<rect x="663" y="231" width="2" height="2" fill="#0000ff"/>
<rect x="667" y="231" width="2" height="2" fill="#0000ff"/>
<rect x="671" y="231" width="2" height="2" fill="#0000ff"/>
<rect x="679" y="231" width="2" height="2" fill="#0000ff"/>
<rect x="686" y="231" width="2" height="2" fill="#0000ff"/>
<rect x="690" y="231" width="2" height="2" fill="#0000ff"/>
<rect x="698" y="231" width="2" height="2" fill="#0000ff"/>
<rect x="706" y="231" width="2" height="2" fill="#0000ff"/>
<rect x="587" y="235" width="2" height="2" fill="#0000ff"/>
<rect x="591" y="235" width="2" height="2" fill="#0000ff"/>
<rect x="594" y="235" width="2" height="2" fill="#0000ff"/>
<rect x="598" y="235" width="2" height="2" fill="#0000ff"/>
<rect x="602" y="235" width="2" height="2" fill="#0000ff"/>
<rect x="610" y="235" width="2" height="2" fill="#0000ff"/>
<rect x="617" y="235" width="2" height="2" fill="#0000ff"/>
<rect x="621" y="235" width="2" height="2" fill="#0000ff"/>
<rect x="625" y="235" width="2" height="2" fill="#0000ff"/>
<rect x="629" y="235" width="2" height="2" fill="#0000ff"/>
<rect x="633" y="235" width="2" height="2" fill="#0000ff"/>
<rect x="637" y="235" width="2" height="2" fill="#0000ff"/>
<rect x="640" y="235" width="2" height="2" fill="#0000ff"/>
<rect x="644" y="235" width="2" height="2" fill="#0000ff"/>
<rect x="648" y="235" width="2" height="2" fill="#0000ff"/>
<rect x="652" y="235" width="2" height="2" fill="#0000ff"/>
<rect x="663" y="235" width="2" height="2" fill="#0000ff"/>
<rect x="675" y="235" width="2" height="2" fill="#0000ff"/>
<rect x="564" y="239" width="2" height="2" fill="#0000ff"/>
<rect x="579" y="239" width="2" height="2" fill="#0000ff"/>
<rect x="583" y="239" width="2" height="2" fill="#0000ff"/>
<rect x="587" y="239" width="2" height="2" fill="#0000ff"/>
<rect x="606" y="239" width="2" height="2" fill="#0000ff"/>
<rect x="610" y="239" width="2" height="2" fill="#0000ff"/>
<rect x="614" y="239" width="2" height="2" fill="#0000ff"/>
<rect x="617" y="239" width="2" height="2" fill="#0000ff"/>
<rect x="621" y="239" width="2" height="2" fill="#0000ff"/>
<rect x="625" y="239" width="2" height="2" fill="#0000ff"/>
<rect x="629" y="239" width="2" height="2" fill="#0000ff"/>
<rect x="633" y="239" width="2" height="2" fill="#0000ff"/>
<rect x="637" y="239" width="2" height="2" fill="#0000ff"/>
<rect x="640" y="239" width="2" height="2" fill="#0000ff"/>
<rect x="644" y="239" width="2" height="2" fill="#0000ff"/>
<rect x="648" y="239" width="2" height="2" fill="#0000ff"/>
<rect x="652" y="239" width="2" height="2" fill="#0000ff"/>
<rect x="660" y="239" width="2" height="2" fill="#0000ff"/>
<rect x="663" y="239" width="2" height="2" fill="#0000ff"/>
<rect x="667" y="239" width="2" height="2" fill="#0000ff"/>
<rect x="683" y="239" width="2" height="2" fill="#0000ff"/>
<rect x="694" y="239" width="2" height="2" fill="#0000ff"/>
<rect x="706" y="239" width="2" height="2" fill="#0000ff"/>
<rect x="556" y="244" width="2" height="2" fill="#0000ff"/>
<rect x="575" y="244" width="2" height="2" fill="#0000ff"/>
<rect x="579" y="244" width="2" height="2" fill="#0000ff"/>
<rect x="587" y="244" width="2" height="2" fill="#0000ff"/>
<rect x="598" y="244" width="2" height="2" fill="#0000ff"/>
<rect x="602" y="244" width="2" height="2" fill="#0000ff"/>
<rect x="614" y="244" width="2" height="2" fill="#0000ff"/>
<rect x="617" y="244" width="2" height="2" fill="#0000ff"/>
<rect x="621" y="244" width="2" height="2" fill="#0000ff"/>
<rect x="625" y="244" width="2" height="2" fill="#0000ff"/>
<rect x="629" y="244" width="2" height="2" fill="#0000ff"/>
<rect x="633" y="244" width="2" height="2" fill="#0000ff"/>
<rect x="637" y="244" width="2" height="2" fill="#0000ff"/>
<rect x="640" y="244" width="2" height="2" fill="#0000ff"/>
<rect x="644" y="244" width="2" height="2" fill="#0000ff"/>
<rect x="648" y="244" width="2" height="2" fill="#0000ff"/>
<rect x="652" y="244" width="2" height="2" fill="#0000ff"/>
<rect x="656" y="244" width="2" height="2" fill="#0000ff"/>
<rect x="660" y="244" width="2" height="2" fill="#0000ff"/>
<rect x="663" y="244" width="2" height="2" fill="#0000ff"/>
<rect x="667" y="244" width="2" height="2" fill="#0000ff"/>
<rect x="671" y="244" width="2" height="2" fill="#0000ff"/>
<rect x="675" y="244" width="2" height="2" fill="#0000ff"/>
<rect x="679" y="244" width="2" height="2" fill="#0000ff"/>
<rect x="698" y="244" width="2" height="2" fill="#0000ff"/>
<rect x="575" y="248" width="2" height="2" fill="#0000ff"/>
<rect x="587" y="248" width="2" height="2" fill="#0000ff"/>
<rect x="594" y="248" width="2" height="2" fill="#0000ff"/>
<rect x="598" y="248" width="2" height="2" fill="#0000ff"/>
<rect x="602" y="248" width="2" height="2" fill="#0000ff"/>
<rect x="610" y="248" width="2" height="2" fill="#0000ff"/>
<rect x="614" y="248" width="2" height="2" fill="#0000ff"/>
<rect x="617" y="248" width="2" height="2" fill="#0000ff"/>
<rect x="621" y="248" width="2" height="2" fill="#0000ff"/>
<rect x="625" y="248" width="2" height="2" fill="#0000ff"/>
<rect x="629" y="248" width="2" height="2" fill="#0000ff"/>
<rect x="633" y="248" width="2" height="2" fill="#0000ff"/>
<rect x="637" y="248" width="2" height="2" fill="#0000ff"/>
<rect x="640" y="248" width="2" height="2" fill="#0000ff"/>
<rect x="644" y="248" width="2" height="2" fill="#0000ff"/>
<rect x="648" y="248" width="2" height="2" fill="#0000ff"/>
<rect x="656" y="248" width="2" height="2" fill="#0000ff"/>
<rect x="663" y="248" width="2" height="2" fill="#0000ff"/>
<rect x="667" y="248" width="2" height="2" fill="#0000ff"/>
<rect x="679" y="248" width="2" height="2" fill="#0000ff"/>
<rect x="690" y="248" width="2" height="2" fill="#0000ff"/>
<rect x="694" y="248" width="2" height="2" fill="#0000ff"/>
<rect x="571" y="252" width="2" height="2" fill="#0000ff"/>
<rect x="591" y="252" width="2" height="2" fill="#0000ff"/>
<rect x="594" y="252" width="2" height="2" fill="#0000ff"/>
<rect x="598" y="252" width="2" height="2" fill="#0000ff"/>
<rect x="606" y="252" width="2" height="2" fill="#0000ff"/>
<rect x="617" y="252" width="2" height="2" fill="#0000ff"/>
<rect x="621" y="252" width="2" height="2" fill="#0000ff"/>
<rect x="625" y="252" width="2" height="2" fill="#0000ff"/>
<rect x="629" y="252" width="2" height="2" fill="#0000ff"/>
<rect x="633" y="252" width="2" height="2" fill="#0000ff"/>
<rect x="637" y="252" width="2" height="2" fill="#0000ff"/>
<rect x="640" y="252" width="2" height="2" fill="#0000ff"/>
<rect x="644" y="252" width="2" height="2" fill="#0000ff"/>
<rect x="652" y="252" width="2" height="2" fill="#0000ff"/>
<rect x="675" y="252" width="2" height="2" fill="#0000ff"/>
<rect x="709" y="252" width="2" height="2" fill="#0000ff"/>
<rect x="564" y="256" width="2" height="2" fill="#0000ff"/>
<rect x="579" y="256" width="2" height="2" fill="#0000ff"/>
<rect x="587" y="256" width="2" height="2" fill="#0000ff"/>
<rect x="591" y="256" width="2" height="2" fill="#0000ff"/>
<rect x="598" y="256" width="2" height="2" fill="#0000ff"/>
<rect x="602" y="256" width="2" height="2" fill="#0000ff"/>
<rect x="606" y="256" width="2" height="2" fill="#0000ff"/>
<rect x="610" y="256" width="2" height="2" fill="#0000ff"/>
<rect x="614" y="256" width="2" height="2" fill="#0000ff"/>
<rect x="617" y="256" width="2" height="2" fill="#0000ff"/>
<rect x="621" y="256" width="2" height="2" fill="#0000ff"/>
<rect x="625" y="256" width="2" height="2" fill="#0000ff"/>
<rect x="629" y="256" width="2" height="2" fill="#0000ff"/>
<rect x="633" y="256" width="2" height="2" fill="#0000ff"/>
<rect x="637" y="256" width="2" height="2" fill="#0000ff"/>
<rect x="640" y="256" width="2" height="2" fill="#0000ff"/>
<rect x="644" y="256" width="2" height="2" fill="#0000ff"/>
<rect x="652" y="256" width="2" height="2" fill="#0000ff"/>
<rect x="656" y="256" width="2" height="2" fill="#0000ff"/>
<rect x="660" y="256" width="2" height="2" fill="#0000ff"/>
<rect x="675" y="256" width="2" height="2" fill="#0000ff"/>
<rect x="694" y="256" width="2" height="2" fill="#0000ff"/>
<rect x="698" y="256" width="2" height="2" fill="#0000ff"/>
<rect x="583" y="260" width="2" height="2" fill="#0000ff"/>
<rect x="598" y="260" width="2" height="2" fill="#0000ff"/>
<rect x="602" y="260" width="2" height="2" fill="#0000ff"/>
<rect x="610" y="260" width="2" height="2" fill="#0000ff"/>
<rect x="614" y="260" width="2" height="2" fill="#0000ff"/>
<rect x="617" y="260" width="2" height="2" fill="#0000ff"/>
<rect x="621" y="260" width="2" height="2" fill="#0000ff"/>
<rect x="625" y="260" width="2" height="2" fill="#0000ff"/>
<rect x="629" y="260" width="2" height="2" fill="#0000ff"/>
<rect x="633" y="260" width="2" height="2" fill="#0000ff"/>
<rect x="637" y="260" width="2" height="2" fill="#0000ff"/>
<rect x="640" y="260" width="2" height="2" fill="#0000ff"/>
<rect x="648" y="260" width="2" height="2" fill="#0000ff"/>
<rect x="652" y="260" width="2" height="2" fill="#0000ff"/>
<rect x="663" y="260" width="2" height="2" fill="#0000ff"/>
<rect x="671" y="260" width="2" height="2" fill="#0000ff"/>
<rect x="683" y="260" width="2" height="2" fill="#0000ff"/>
<rect x="706" y="260" width="2" height="2" fill="#0000ff"/>
<rect x="709" y="260" width="2" height="2" fill="#0000ff"/>
<rect x="560" y="264" width="2" height="2" fill="#0000ff"/>
<rect x="583" y="264" width="2" height="2" fill="#0000ff"/>
<rect x="587" y="264" width="2" height="2" fill="#0000ff"/>
<rect x="602" y="264" width="2" height="2" fill="#0000ff"/>
<rect x="606" y="264" width="2" height="2" fill="#0000ff"/>
<rect x="610" y="264" width="2" height="2" fill="#0000ff"/>
<rect x="614" y="264" width="2" height="2" fill="#0000ff"/>
<rect x="617" y="264" width="2" height="2" fill="#0000ff"/>
<rect x="621" y="264" width="2" height="2" fill="#0000ff"/>
<rect x="625" y="264" width="2" height="2" fill="#0000ff"/>
<rect x="629" y="264" width="2" height="2" fill="#0000ff"/>
<rect x="633" y="264" width="2" height="2" fill="#0000ff"/>
<rect x="637" y="264" width="2" height="2" fill="#0000ff"/>
<rect x="640" y="264" width="2" height="2" fill="#0000ff"/>
<rect x="644" y="264" width="2" height="2" fill="#0000ff"/>
<rect x="648" y="264" width="2" height="2" fill="#0000ff"/>
<rect x="652" y="264" width="2" height="2" fill="#0000ff"/>
<rect x="660" y="264" width="2" height="2" fill="#0000ff"/>
<rect x="667" y="264" width="2" height="2" fill="#0000ff"/>
<rect x="671" y="264" width="2" height="2" fill="#0000ff"/>
<rect x="675" y="264" width="2" height="2" fill="#0000ff"/>
<rect x="683" y="264" width="2" height="2" fill="#0000ff"/>
<rect x="686" y="264" width="2" height="2" fill="#0000ff"/>
<rect x="702" y="264" width="2" height="2" fill="#0000ff"/>
<rect x="709" y="264" width="2" height="2" fill="#0000ff"/>
<rect x="598" y="268" width="2" height="2" fill="#0000ff"/>
<rect x="606" y="268" width="2" height="2" fill="#0000ff"/>
<rect x="614" y="268" width="2" height="2" fill="#0000ff"/>
<rect x="617" y="268" width="2" height="2" fill="#0000ff"/>
<rect x="621" y="268" width="2" height="2" fill="#0000ff"/>
<rect x="625" y="268" width="2" height="2" fill="#0000ff"/>
<rect x="629" y="268" width="2" height="2" fill="#0000ff"/>
<rect x="633" y="268" width="2" height="2" fill="#0000ff"/>
<rect x="637" y="268" width="2" height="2" fill="#0000ff"/>
<rect x="640" y="268" width="2" height="2" fill="#0000ff"/>
<rect x="644" y="268" width="2" height="2" fill="#0000ff"/>
<rect x="648" y="268" width="2" height="2" fill="#0000ff"/>
<rect x="652" y="268" width="2" height="2" fill="#0000ff"/>
<rect x="656" y="268" width="2" height="2" fill="#0000ff"/>
<rect x="667" y="268" width="2" height="2" fill="#0000ff"/>
<rect x="671" y="268" width="2" height="2" fill="#0000ff"/>
<rect x="675" y="268" width="2" height="2" fill="#0000ff"/>
<rect x="564" y="272" width="2" height="2" fill="#0000ff"/>
<rect x="571" y="272" width="2" height="2" fill="#0000ff"/>
<rect x="583" y="272" width="2" height="2" fill="#0000ff"/>
<rect x="587" y="272" width="2" height="2" fill="#0000ff"/>
<rect x="591" y="272" width="2" height="2" fill="#0000ff"/>
<rect x="594" y="272" width="2" height="2" fill="#0000ff"/>
<rect x="602" y="272" width="2" height="2" fill="#0000ff"/>
<rect x="606" y="272" width="2" height="2" fill="#0000ff"/>
<rect x="610" y="272" width="2" height="2" fill="#0000ff"/>
<rect x="614" y="272" width="2" height="2" fill="#0000ff"/>
<rect x="617" y="272" width="2" height="2" fill="#0000ff"/>
<rect x="621" y="272" width="2" height="2" fill="#0000ff"/>
<rect x="625" y="272" width="2" height="2" fill="#0000ff"/>
<rect x="629" y="272" width="2" height="2" fill="#0000ff"/>
<rect x="633" y="272" width="2" height="2" fill="#0000ff"/>
<rect x="637" y="272" width="2" height="2" fill="#0000ff"/>
<rect x="640" y="272" width="2" height="2" fill="#0000ff"/>
<rect x="648" y="272" width="2" height="2" fill="#0000ff"/>
<rect x="652" y="272" width="2" height="2" fill="#0000ff"/>
<rect x="656" y="272" width="2" height="2" fill="#0000ff"/>
<rect x="663" y="272" width="2" height="2" fill="#0000ff"/>
<rect x="667" y="272" width="2" height="2" fill="#0000ff"/>
<rect x="679" y="272" width="2" height="2" fill="#0000ff"/>
<rect x="702" y="272" width="2" height="2" fill="#0000ff"/>
<rect x="721" y="272" width="2" height="2" fill="#0000ff"/>
<rect x="571" y="277" width="2" height="2" fill="#0000ff"/>
<rect x="575" y="277" width="2" height="2" fill="#0000ff"/>
<rect x="598" y="277" width="2" height="2" fill="#0000ff"/>
<rect x="602" y="277" width="2" height="2" fill="#0000ff"/>
<rect x="606" y="277" width="2" height="2" fill="#0000ff"/>
<rect x="610" y="277" width="2" height="2" fill="#0000ff"/>
<rect x="614" y="277" width="2" height="2" fill="#0000ff"/>
<rect x="617" y="277" width="2" height="2" fill="#0000ff"/>
<rect x="621" y="277" width="2" height="2" fill="#0000ff"/>
<rect x="625" y="277" width="2" height="2" fill="#0000ff"/>
<rect x="629" y="277" width="2" height="2" fill="#0000ff"/>
<rect x="633" y="277" width="2" height="2" fill="#0000ff"/>
<rect x="637" y="277" width="2" height="2" fill="#0000ff"/>
<rect x="640" y="277" width="2" height="2" fill="#0000ff"/>
<rect x="644" y="277" width="2" height="2" fill="#0000ff"/>
<rect x="648" y="277" width="2" height="2" fill="#0000ff"/>
<rect x="656" y="277" width="2" height="2" fill="#0000ff"/>
<rect x="667" y="277" width="2" height="2" fill="#0000ff"/>
<rect x="675" y="277" width="2" height="2" fill="#0000ff"/>
<rect x="679" y="277" width="2" height="2" fill="#0000ff"/>
<rect x="709" y="277" width="2" height="2" fill="#0000ff"/>
<rect x="713" y="277" width="2" height="2" fill="#0000ff"/>
<rect x="556" y="281" width="2" height="2" fill="#0000ff"/>
<rect x="568" y="281" width="2" height="2" fill="#0000ff"/>
<rect x="575" y="281" width="2" height="2" fill="#0000ff"/>
<rect x="594" y="281" width="2" height="2" fill="#0000ff"/>
<rect x="598" y="281" width="2" height="2" fill="#0000ff"/>
<rect x="602" y="281" width="2" height="2" fill="#0000ff"/>
<rect x="606" y="281" width="2" height="2" fill="#0000ff"/>
<rect x="610" y="281" width="2" height="2" fill="#0000ff"/>
<rect x="614" y="281" width="2" height="2" fill="#0000ff"/>
<rect x="617" y="281" width="2" height="2" fill="#0000ff"/>
<rect x="621" y="281" width="2" height="2" fill="#0000ff"/>
<rect x="625" y="281" width="2" height="2" fill="#0000ff"/>
<rect x="629" y="281" width="2" height="2" fill="#0000ff"/>
<rect x="633" y="281" width="2" height="2" fill="#0000ff"/>
<rect x="637" y="281" width="2" height="2" fill="#0000ff"/>
<rect x="640" y="281" width="2" height="2" fill="#0000ff"/>
<rect x="644" y="281" width="2" height="2" fill="#0000ff"/>
<rect x="648" y="281" width="2" height="2" fill="#0000ff"/>
<rect x="656" y="281" width="2" height="2" fill="#0000ff"/>
<rect x="660" y="281" width="2" height="2" fill="#0000ff"/>
<rect x="663" y="281" width="2" height="2" fill="#0000ff"/>
<rect x="667" y="281" width="2" height="2" fill="#0000ff"/>
<rect x="579" y="285" width="2" height="2" fill="#0000ff"/>
<rect x="591" y="285" width="2" height="2" fill="#0000ff"/>
<rect x="594" y="285" width="2" height="2" fill="#0000ff"/>
<rect x="610" y="285" width="2" height="2" fill="#0000ff"/>
<rect x="617" y="285" width="2" height="2" fill="#0000ff"/>
<rect x="621" y="285" width="2" height="2" fill="#0000ff"/>
<rect x="625" y="285" width="2" height="2" fill="#0000ff"/>
<rect x="629" y="285" width="2" height="2" fill="#0000ff"/>
<rect x="633" y="285" width="2" height="2" fill="#0000ff"/>
<rect x="637" y="285" width="2" height="2" fill="#0000ff"/>
<rect x="640" y="285" width="2" height="2" fill="#0000ff"/>
<rect x="644" y="285" width="2" height="2" fill="#0000ff"/>
<rect x="648" y="285" width="2" height="2" fill="#0000ff"/>
<rect x="652" y="285" width="2" height="2" fill="#0000ff"/>
<rect x="656" y="285" width="2" height="2" fill="#0000ff"/>
<rect x="663" y="285" width="2" height="2" fill="#0000ff"/>
<rect x="671" y="285" width="2" height="2" fill="#0000ff"/>
<rect x="683" y="285" width="2" height="2" fill="#0000ff"/>
<rect x="686" y="285" width="2" height="2" fill="#0000ff"/>
<rect x="713" y="285" width="2" height="2" fill="#0000ff"/>
<line x1="542.50" y1="238.50" x2="767.50" y2="238.50" stroke="#ff3333" stroke-width="1" />
<text x="727.20" y="232.80" font-size="10.9" text-anchor="start" fill="#ff0000" font-weight="normal" font-family='"Liberation Sans", sans-serif' >Trial 13</text>
<path d="M715 230.5 H723 M717.5 228 L715 230.5 L717.5 233" fill="none" stroke="#ff0000" stroke-width="0.8"/>
<text x="654.50" y="181.70" font-size="12.4" text-anchor="middle" fill="#000" font-weight="bold" font-family='"Liberation Sans", sans-serif' >Spike train</text>
<text x="655.00" y="316.90" font-size="12.4" text-anchor="middle" fill="#262626" font-weight="normal" font-family='"Liberation Sans", sans-serif' >Time (seconds)</text>
<text x="0" y="0" font-size="11.6" text-anchor="middle" fill="#262626" font-family='"Liberation Sans", sans-serif' transform="translate(520.6,238) rotate(-90)">Trial #</text>
<text x="654.60" y="361.70" font-size="12.2" text-anchor="middle" fill="#000" font-weight="bold" font-family='"Liberation Sans", sans-serif' >Area of activation</text>
<rect x="542.00" y="368.00" width="226.00" height="225.00" fill="#000000" />
<clipPath id="headclip"><path d="M654.9 403.6 C657.6 404.4 660.7 409.2 663.3 412.0 C665.9 414.8 666.7 418.7 670.5 420.5 C674.3 422.3 681.7 421.6 686.3 423.0 C690.9 424.4 694.7 426.6 698.3 429.0 C701.9 431.4 705.4 434.3 708.0 437.5 C710.6 440.7 712.4 444.1 714.0 448.3 C715.6 452.5 716.8 458.0 717.7 462.8 C718.6 467.6 719.0 472.8 719.5 477.3 C720.0 481.8 720.3 485.9 720.5 490.0 C720.7 494.1 720.8 498.3 720.5 502.0 C720.2 505.7 719.6 508.2 718.5 512.0 C717.4 515.8 715.4 520.1 714.0 525.0 C712.6 529.9 712.1 536.9 710.4 541.4 C708.6 545.9 706.0 548.9 703.5 552.0 C701.0 555.1 698.5 557.6 695.6 560.2 C692.7 562.8 689.1 565.5 686.0 567.5 C682.9 569.5 680.6 570.6 676.8 572.2 C673.0 573.8 667.5 576.1 663.0 577.0 C658.5 577.9 655.3 578.6 650.0 577.8 C644.7 577.0 636.1 574.0 631.4 572.2 C626.7 570.4 624.9 569.0 622.0 567.0 C619.1 565.0 616.6 562.7 613.9 560.2 C611.2 557.7 608.0 554.7 606.0 552.0 C604.0 549.3 603.2 547.7 601.8 544.0 C600.4 540.3 598.5 534.0 597.5 530.0 C596.5 526.0 596.8 523.3 595.5 520.0 C594.2 516.7 591.4 513.3 590.0 510.0 C588.6 506.7 587.7 503.3 587.3 500.0 C586.9 496.7 587.1 494.6 587.5 490.0 C587.9 485.4 589.0 477.4 589.7 472.5 C590.4 467.6 590.7 464.4 591.5 460.4 C592.3 456.4 593.2 451.9 594.5 448.3 C595.8 444.7 596.9 441.9 599.3 438.7 C601.7 435.5 605.6 431.7 609.0 429.0 C612.4 426.3 615.3 423.9 619.9 422.4 C624.5 420.9 633.4 421.3 636.8 420.0 C640.2 418.7 638.7 416.7 640.4 414.5 C642.1 412.3 644.6 408.8 647.0 407.0 C649.4 405.2 652.2 402.8 654.9 403.6 Z"/></clipPath>
<path d="M654.9 403.6 C657.6 404.4 660.7 409.2 663.3 412.0 C665.9 414.8 666.7 418.7 670.5 420.5 C674.3 422.3 681.7 421.6 686.3 423.0 C690.9 424.4 694.7 426.6 698.3 429.0 C701.9 431.4 705.4 434.3 708.0 437.5 C710.6 440.7 712.4 444.1 714.0 448.3 C715.6 452.5 716.8 458.0 717.7 462.8 C718.6 467.6 719.0 472.8 719.5 477.3 C720.0 481.8 720.3 485.9 720.5 490.0 C720.7 494.1 720.8 498.3 720.5 502.0 C720.2 505.7 719.6 508.2 718.5 512.0 C717.4 515.8 715.4 520.1 714.0 525.0 C712.6 529.9 712.1 536.9 710.4 541.4 C708.6 545.9 706.0 548.9 703.5 552.0 C701.0 555.1 698.5 557.6 695.6 560.2 C692.7 562.8 689.1 565.5 686.0 567.5 C682.9 569.5 680.6 570.6 676.8 572.2 C673.0 573.8 667.5 576.1 663.0 577.0 C658.5 577.9 655.3 578.6 650.0 577.8 C644.7 577.0 636.1 574.0 631.4 572.2 C626.7 570.4 624.9 569.0 622.0 567.0 C619.1 565.0 616.6 562.7 613.9 560.2 C611.2 557.7 608.0 554.7 606.0 552.0 C604.0 549.3 603.2 547.7 601.8 544.0 C600.4 540.3 598.5 534.0 597.5 530.0 C596.5 526.0 596.8 523.3 595.5 520.0 C594.2 516.7 591.4 513.3 590.0 510.0 C588.6 506.7 587.7 503.3 587.3 500.0 C586.9 496.7 587.1 494.6 587.5 490.0 C587.9 485.4 589.0 477.4 589.7 472.5 C590.4 467.6 590.7 464.4 591.5 460.4 C592.3 456.4 593.2 451.9 594.5 448.3 C595.8 444.7 596.9 441.9 599.3 438.7 C601.7 435.5 605.6 431.7 609.0 429.0 C612.4 426.3 615.3 423.9 619.9 422.4 C624.5 420.9 633.4 421.3 636.8 420.0 C640.2 418.7 638.7 416.7 640.4 414.5 C642.1 412.3 644.6 408.8 647.0 407.0 C649.4 405.2 652.2 402.8 654.9 403.6 Z" fill="#d6d6d6"/>
<g clip-path="url(#headclip)">
<ellipse cx="655" cy="550" rx="54" ry="24" fill="#9e9e9e"/>
<ellipse cx="655" cy="528" rx="40" ry="10" fill="#c8c8c8"/>
<ellipse cx="612" cy="470" rx="13" ry="23" fill="#a2a2a2" transform="rotate(-15 612 470)"/>
<ellipse cx="697" cy="470" rx="13" ry="23" fill="#a2a2a2" transform="rotate(15 697 470)"/>
<rect x="584.0" y="400.1" width="1.8" height="1.8" fill="rgb(255,255,255)"/>
<rect x="584.2" y="414.8" width="1.8" height="1.8" fill="rgb(255,255,255)"/>
<rect x="584.6" y="431.9" width="1.8" height="1.8" fill="rgb(255,255,255)"/>
<rect x="583.3" y="434.8" width="1.8" height="1.8" fill="rgb(255,255,255)"/>
<rect x="584.9" y="439.8" width="1.8" height="1.8" fill="rgb(240,240,240)"/>
<rect x="584.7" y="449.4" width="1.8" height="1.8" fill="rgb(70,70,70)"/>
<rect x="584.2" y="459.7" width="1.8" height="1.8" fill="rgb(250,250,250)"/>
<rect x="583.4" y="463.5" width="1.8" height="1.8" fill="rgb(110,110,110)"/>
<rect x="584.0" y="470.8" width="1.8" height="1.8" fill="rgb(170,170,170)"/>
<rect x="584.0" y="473.9" width="1.8" height="1.8" fill="rgb(140,140,140)"/>
<rect x="584.9" y="480.6" width="1.8" height="1.8" fill="rgb(240,240,240)"/>
<rect x="583.3" y="495.8" width="1.8" height="1.8" fill="rgb(255,255,255)"/>
<rect x="583.5" y="514.0" width="1.8" height="1.8" fill="rgb(170,170,170)"/>
<rect x="584.5" y="516.3" width="1.8" height="1.8" fill="rgb(255,255,255)"/>
<rect x="583.6" y="521.1" width="1.8" height="1.8" fill="rgb(110,110,110)"/>
<rect x="584.8" y="527.0" width="1.8" height="1.8" fill="rgb(240,240,240)"/>
<rect x="584.1" y="535.2" width="1.8" height="1.8" fill="rgb(140,140,140)"/>
<rect x="583.7" y="538.2" width="1.8" height="1.8" fill="rgb(110,110,110)"/>
<rect x="584.7" y="556.5" width="1.8" height="1.8" fill="rgb(255,255,255)"/>
<rect x="583.3" y="563.5" width="1.8" height="1.8" fill="rgb(70,70,70)"/>
<rect x="584.5" y="569.7" width="1.8" height="1.8" fill="rgb(110,110,110)"/>
<rect x="587.6" y="402.9" width="1.8" height="1.8" fill="rgb(70,70,70)"/>
<rect x="588.2" y="407.2" width="1.8" height="1.8" fill="rgb(255,255,255)"/>
<rect x="587.5" y="417.4" width="1.8" height="1.8" fill="rgb(255,255,255)"/>
<rect x="587.6" y="427.9" width="1.8" height="1.8" fill="rgb(255,255,255)"/>
<rect x="587.8" y="439.0" width="1.8" height="1.8" fill="rgb(250,250,250)"/>
<rect x="587.9" y="442.4" width="1.8" height="1.8" fill="rgb(250,250,250)"/>
<rect x="587.5" y="445.6" width="1.8" height="1.8" fill="rgb(170,170,170)"/>
<rect x="588.2" y="457.2" width="1.8" height="1.8" fill="rgb(240,240,240)"/>
<rect x="587.7" y="467.6" width="1.8" height="1.8" fill="rgb(255,255,255)"/>
<rect x="588.1" y="484.6" width="1.8" height="1.8" fill="rgb(70,70,70)"/>
<rect x="587.0" y="495.1" width="1.8" height="1.8" fill="rgb(240,240,240)"/>
<rect x="587.6" y="520.6" width="1.8" height="1.8" fill="rgb(255,255,255)"/>
<rect x="588.4" y="530.4" width="1.8" height="1.8" fill="rgb(110,110,110)"/>
<rect x="587.2" y="535.2" width="1.8" height="1.8" fill="rgb(240,240,240)"/>
<rect x="588.1" y="551.5" width="1.8" height="1.8" fill="rgb(140,140,140)"/>
<rect x="587.7" y="556.1" width="1.8" height="1.8" fill="rgb(255,255,255)"/>
<rect x="587.1" y="559.3" width="1.8" height="1.8" fill="rgb(255,255,255)"/>
<rect x="588.4" y="562.8" width="1.8" height="1.8" fill="rgb(110,110,110)"/>
<rect x="587.9" y="577.7" width="1.8" height="1.8" fill="rgb(170,170,170)"/>
<rect x="591.2" y="409.9" width="1.8" height="1.8" fill="rgb(255,255,255)"/>
<rect x="591.0" y="422.0" width="1.8" height="1.8" fill="rgb(240,240,240)"/>
<rect x="591.8" y="429.0" width="1.8" height="1.8" fill="rgb(255,255,255)"/>
<rect x="591.9" y="434.8" width="1.8" height="1.8" fill="rgb(70,70,70)"/>
<rect x="591.7" y="449.8" width="1.8" height="1.8" fill="rgb(255,255,255)"/>
<rect x="591.8" y="452.4" width="1.8" height="1.8" fill="rgb(255,255,255)"/>
<rect x="591.4" y="456.7" width="1.8" height="1.8" fill="rgb(255,255,255)"/>
<rect x="591.4" y="460.2" width="1.8" height="1.8" fill="rgb(140,140,140)"/>
<rect x="590.8" y="464.1" width="1.8" height="1.8" fill="rgb(140,140,140)"/>
<rect x="590.9" y="467.0" width="1.8" height="1.8" fill="rgb(170,170,170)"/>
<rect x="591.0" y="477.8" width="1.8" height="1.8" fill="rgb(255,255,255)"/>
<rect x="591.5" y="489.2" width="1.8" height="1.8" fill="rgb(110,110,110)"/>
<rect x="592.0" y="496.1" width="1.8" height="1.8" fill="rgb(255,255,255)"/>
<rect x="590.7" y="505.7" width="1.8" height="1.8" fill="rgb(240,240,240)"/>
<rect x="591.9" y="513.2" width="1.8" height="1.8" fill="rgb(250,250,250)"/>
<rect x="590.7" y="520.2" width="1.8" height="1.8" fill="rgb(70,70,70)"/>
<rect x="591.8" y="535.0" width="1.8" height="1.8" fill="rgb(255,255,255)"/>
<rect x="591.8" y="563.6" width="1.8" height="1.8" fill="rgb(70,70,70)"/>
<rect x="590.8" y="567.1" width="1.8" height="1.8" fill="rgb(250,250,250)"/>
<rect x="595.0" y="421.3" width="1.8" height="1.8" fill="rgb(70,70,70)"/>
<rect x="595.4" y="442.8" width="1.8" height="1.8" fill="rgb(70,70,70)"/>
<rect x="594.1" y="481.3" width="1.8" height="1.8" fill="rgb(255,255,255)"/>
<rect x="594.9" y="485.2" width="1.8" height="1.8" fill="rgb(250,250,250)"/>
<rect x="595.2" y="488.6" width="1.8" height="1.8" fill="rgb(240,240,240)"/>
<rect x="595.3" y="496.1" width="1.8" height="1.8" fill="rgb(250,250,250)"/>
<rect x="594.4" y="499.3" width="1.8" height="1.8" fill="rgb(170,170,170)"/>
<rect x="594.3" y="507.0" width="1.8" height="1.8" fill="rgb(70,70,70)"/>
<rect x="594.4" y="517.2" width="1.8" height="1.8" fill="rgb(140,140,140)"/>
<rect x="594.1" y="531.5" width="1.8" height="1.8" fill="rgb(170,170,170)"/>
<rect x="594.2" y="537.5" width="1.8" height="1.8" fill="rgb(250,250,250)"/>
<rect x="594.4" y="542.0" width="1.8" height="1.8" fill="rgb(140,140,140)"/>
<rect x="594.8" y="552.2" width="1.8" height="1.8" fill="rgb(240,240,240)"/>
<rect x="595.4" y="559.5" width="1.8" height="1.8" fill="rgb(255,255,255)"/>
<rect x="594.1" y="566.2" width="1.8" height="1.8" fill="rgb(250,250,250)"/>
<rect x="594.9" y="574.1" width="1.8" height="1.8" fill="rgb(240,240,240)"/>
<rect x="598.0" y="399.9" width="1.8" height="1.8" fill="rgb(255,255,255)"/>
<rect x="597.8" y="410.7" width="1.8" height="1.8" fill="rgb(255,255,255)"/>
<rect x="597.6" y="417.6" width="1.8" height="1.8" fill="rgb(70,70,70)"/>
<rect x="597.9" y="424.0" width="1.8" height="1.8" fill="rgb(255,255,255)"/>
<rect x="597.6" y="428.4" width="1.8" height="1.8" fill="rgb(110,110,110)"/>
<rect x="598.0" y="434.7" width="1.8" height="1.8" fill="rgb(110,110,110)"/>
<rect x="598.3" y="453.5" width="1.8" height="1.8" fill="rgb(70,70,70)"/>
<rect x="598.1" y="457.2" width="1.8" height="1.8" fill="rgb(70,70,70)"/>
<rect x="598.7" y="460.7" width="1.8" height="1.8" fill="rgb(255,255,255)"/>
<rect x="598.5" y="463.8" width="1.8" height="1.8" fill="rgb(110,110,110)"/>
<rect x="598.0" y="480.8" width="1.8" height="1.8" fill="rgb(140,140,140)"/>
<rect x="598.9" y="503.4" width="1.8" height="1.8" fill="rgb(255,255,255)"/>
<rect x="598.2" y="505.8" width="1.8" height="1.8" fill="rgb(250,250,250)"/>
<rect x="597.7" y="517.3" width="1.8" height="1.8" fill="rgb(255,255,255)"/>
<rect x="598.9" y="524.5" width="1.8" height="1.8" fill="rgb(250,250,250)"/>
<rect x="598.9" y="530.9" width="1.8" height="1.8" fill="rgb(140,140,140)"/>
<rect x="598.3" y="541.1" width="1.8" height="1.8" fill="rgb(70,70,70)"/>
<rect x="598.3" y="552.9" width="1.8" height="1.8" fill="rgb(110,110,110)"/>
<rect x="599.0" y="555.9" width="1.8" height="1.8" fill="rgb(240,240,240)"/>
<rect x="598.1" y="573.6" width="1.8" height="1.8" fill="rgb(110,110,110)"/>
<rect x="601.6" y="400.0" width="1.8" height="1.8" fill="rgb(110,110,110)"/>
<rect x="601.7" y="409.9" width="1.8" height="1.8" fill="rgb(170,170,170)"/>
<rect x="602.4" y="413.6" width="1.8" height="1.8" fill="rgb(255,255,255)"/>
<rect x="602.2" y="418.4" width="1.8" height="1.8" fill="rgb(255,255,255)"/>
<rect x="602.2" y="424.5" width="1.8" height="1.8" fill="rgb(255,255,255)"/>
<rect x="602.2" y="428.1" width="1.8" height="1.8" fill="rgb(110,110,110)"/>
<rect x="601.1" y="438.9" width="1.8" height="1.8" fill="rgb(110,110,110)"/>
<rect x="601.7" y="445.4" width="1.8" height="1.8" fill="rgb(255,255,255)"/>
<rect x="602.5" y="456.9" width="1.8" height="1.8" fill="rgb(250,250,250)"/>
<rect x="602.6" y="460.7" width="1.8" height="1.8" fill="rgb(255,255,255)"/>
<rect x="601.8" y="471.3" width="1.8" height="1.8" fill="rgb(140,140,140)"/>
<rect x="601.9" y="481.0" width="1.8" height="1.8" fill="rgb(170,170,170)"/>
<rect x="601.9" y="484.2" width="1.8" height="1.8" fill="rgb(110,110,110)"/>
<rect x="601.5" y="491.4" width="1.8" height="1.8" fill="rgb(240,240,240)"/>
<rect x="601.7" y="495.0" width="1.8" height="1.8" fill="rgb(140,140,140)"/>
<rect x="602.1" y="513.1" width="1.8" height="1.8" fill="rgb(250,250,250)"/>
<rect x="602.6" y="524.6" width="1.8" height="1.8" fill="rgb(240,240,240)"/>
<rect x="602.2" y="528.0" width="1.8" height="1.8" fill="rgb(70,70,70)"/>
<rect x="602.5" y="540.9" width="1.8" height="1.8" fill="rgb(140,140,140)"/>
<rect x="601.6" y="549.3" width="1.8" height="1.8" fill="rgb(255,255,255)"/>
<rect x="602.2" y="552.2" width="1.8" height="1.8" fill="rgb(255,255,255)"/>
<rect x="601.7" y="562.1" width="1.8" height="1.8" fill="rgb(240,240,240)"/>
<rect x="602.2" y="567.0" width="1.8" height="1.8" fill="rgb(250,250,250)"/>
<rect x="604.6" y="407.8" width="1.8" height="1.8" fill="rgb(250,250,250)"/>
<rect x="605.9" y="410.5" width="1.8" height="1.8" fill="rgb(170,170,170)"/>
<rect x="605.4" y="431.3" width="1.8" height="1.8" fill="rgb(170,170,170)"/>
<rect x="604.6" y="434.7" width="1.8" height="1.8" fill="rgb(240,240,240)"/>
<rect x="605.1" y="438.4" width="1.8" height="1.8" fill="rgb(255,255,255)"/>
<rect x="605.9" y="442.0" width="1.8" height="1.8" fill="rgb(70,70,70)"/>
<rect x="605.3" y="449.1" width="1.8" height="1.8" fill="rgb(255,255,255)"/>
<rect x="605.7" y="459.9" width="1.8" height="1.8" fill="rgb(255,255,255)"/>
<rect x="605.7" y="463.2" width="1.8" height="1.8" fill="rgb(255,255,255)"/>
<rect x="605.2" y="466.8" width="1.8" height="1.8" fill="rgb(110,110,110)"/>
<rect x="604.9" y="474.6" width="1.8" height="1.8" fill="rgb(250,250,250)"/>
<rect x="605.4" y="482.2" width="1.8" height="1.8" fill="rgb(140,140,140)"/>
<rect x="605.6" y="484.6" width="1.8" height="1.8" fill="rgb(110,110,110)"/>
<rect x="605.3" y="487.8" width="1.8" height="1.8" fill="rgb(110,110,110)"/>
<rect x="605.0" y="495.2" width="1.8" height="1.8" fill="rgb(110,110,110)"/>
<rect x="605.8" y="505.7" width="1.8" height="1.8" fill="rgb(255,255,255)"/>
<rect x="605.9" y="524.1" width="1.8" height="1.8" fill="rgb(255,255,255)"/>
<rect x="605.8" y="535.0" width="1.8" height="1.8" fill="rgb(170,170,170)"/>
<rect x="605.0" y="538.2" width="1.8" height="1.8" fill="rgb(255,255,255)"/>
<rect x="605.0" y="541.1" width="1.8" height="1.8" fill="rgb(70,70,70)"/>
<rect x="605.8" y="555.1" width="1.8" height="1.8" fill="rgb(255,255,255)"/>
<rect x="605.5" y="559.7" width="1.8" height="1.8" fill="rgb(70,70,70)"/>
<rect x="605.5" y="569.3" width="1.8" height="1.8" fill="rgb(140,140,140)"/>
<rect x="608.6" y="400.0" width="1.8" height="1.8" fill="rgb(70,70,70)"/>
<rect x="608.8" y="418.4" width="1.8" height="1.8" fill="rgb(170,170,170)"/>
<rect x="608.6" y="420.7" width="1.8" height="1.8" fill="rgb(255,255,255)"/>
<rect x="608.1" y="431.7" width="1.8" height="1.8" fill="rgb(70,70,70)"/>
<rect x="609.3" y="435.5" width="1.8" height="1.8" fill="rgb(140,140,140)"/>
<rect x="608.8" y="438.8" width="1.8" height="1.8" fill="rgb(255,255,255)"/>
<rect x="608.5" y="446.5" width="1.8" height="1.8" fill="rgb(255,255,255)"/>
<rect x="608.6" y="453.0" width="1.8" height="1.8" fill="rgb(140,140,140)"/>
<rect x="608.5" y="467.1" width="1.8" height="1.8" fill="rgb(170,170,170)"/>
<rect x="609.6" y="474.1" width="1.8" height="1.8" fill="rgb(110,110,110)"/>
<rect x="608.4" y="505.9" width="1.8" height="1.8" fill="rgb(255,255,255)"/>
<rect x="608.3" y="517.4" width="1.8" height="1.8" fill="rgb(255,255,255)"/>
<rect x="609.0" y="520.9" width="1.8" height="1.8" fill="rgb(240,240,240)"/>
<rect x="609.1" y="523.2" width="1.8" height="1.8" fill="rgb(255,255,255)"/>
<rect x="609.2" y="527.7" width="1.8" height="1.8" fill="rgb(250,250,250)"/>
<rect x="608.8" y="544.6" width="1.8" height="1.8" fill="rgb(170,170,170)"/>
<rect x="608.9" y="549.1" width="1.8" height="1.8" fill="rgb(140,140,140)"/>
<rect x="608.8" y="551.9" width="1.8" height="1.8" fill="rgb(240,240,240)"/>
<rect x="608.1" y="569.7" width="1.8" height="1.8" fill="rgb(240,240,240)"/>
<rect x="608.8" y="577.2" width="1.8" height="1.8" fill="rgb(250,250,250)"/>
<rect x="612.4" y="410.6" width="1.8" height="1.8" fill="rgb(255,255,255)"/>
<rect x="612.1" y="417.5" width="1.8" height="1.8" fill="rgb(140,140,140)"/>
<rect x="612.0" y="424.8" width="1.8" height="1.8" fill="rgb(255,255,255)"/>
<rect x="611.6" y="428.4" width="1.8" height="1.8" fill="rgb(255,255,255)"/>
<rect x="611.7" y="432.4" width="1.8" height="1.8" fill="rgb(250,250,250)"/>
<rect x="612.2" y="446.3" width="1.8" height="1.8" fill="rgb(240,240,240)"/>
<rect x="612.2" y="449.2" width="1.8" height="1.8" fill="rgb(255,255,255)"/>
<rect x="612.7" y="457.3" width="1.8" height="1.8" fill="rgb(110,110,110)"/>
<rect x="613.2" y="460.7" width="1.8" height="1.8" fill="rgb(240,240,240)"/>
<rect x="611.8" y="463.7" width="1.8" height="1.8" fill="rgb(255,255,255)"/>
<rect x="612.6" y="477.7" width="1.8" height="1.8" fill="rgb(140,140,140)"/>
<rect x="612.2" y="481.9" width="1.8" height="1.8" fill="rgb(140,140,140)"/>
<rect x="612.5" y="484.9" width="1.8" height="1.8" fill="rgb(240,240,240)"/>
<rect x="611.6" y="495.7" width="1.8" height="1.8" fill="rgb(140,140,140)"/>
<rect x="612.7" y="502.5" width="1.8" height="1.8" fill="rgb(140,140,140)"/>
<rect x="611.7" y="509.4" width="1.8" height="1.8" fill="rgb(110,110,110)"/>
<rect x="612.3" y="513.9" width="1.8" height="1.8" fill="rgb(255,255,255)"/>
<rect x="613.0" y="534.6" width="1.8" height="1.8" fill="rgb(255,255,255)"/>
<rect x="612.3" y="537.5" width="1.8" height="1.8" fill="rgb(240,240,240)"/>
<rect x="612.5" y="541.0" width="1.8" height="1.8" fill="rgb(240,240,240)"/>
<rect x="611.6" y="552.7" width="1.8" height="1.8" fill="rgb(70,70,70)"/>
<rect x="611.9" y="555.8" width="1.8" height="1.8" fill="rgb(170,170,170)"/>
<rect x="612.0" y="566.6" width="1.8" height="1.8" fill="rgb(240,240,240)"/>
<rect x="612.1" y="570.6" width="1.8" height="1.8" fill="rgb(255,255,255)"/>
<rect x="616.0" y="418.0" width="1.8" height="1.8" fill="rgb(110,110,110)"/>
<rect x="616.7" y="421.2" width="1.8" height="1.8" fill="rgb(255,255,255)"/>
<rect x="615.8" y="432.1" width="1.8" height="1.8" fill="rgb(250,250,250)"/>
<rect x="616.7" y="460.7" width="1.8" height="1.8" fill="rgb(70,70,70)"/>
<rect x="616.6" y="463.5" width="1.8" height="1.8" fill="rgb(110,110,110)"/>
<rect x="616.7" y="470.8" width="1.8" height="1.8" fill="rgb(140,140,140)"/>
<rect x="616.6" y="478.5" width="1.8" height="1.8" fill="rgb(255,255,255)"/>
<rect x="616.7" y="480.9" width="1.8" height="1.8" fill="rgb(255,255,255)"/>
<rect x="615.7" y="488.4" width="1.8" height="1.8" fill="rgb(255,255,255)"/>
<rect x="616.0" y="505.5" width="1.8" height="1.8" fill="rgb(255,255,255)"/>
<rect x="616.7" y="524.3" width="1.8" height="1.8" fill="rgb(110,110,110)"/>
<rect x="615.5" y="528.0" width="1.8" height="1.8" fill="rgb(140,140,140)"/>
<rect x="616.7" y="533.8" width="1.8" height="1.8" fill="rgb(250,250,250)"/>
<rect x="615.5" y="552.7" width="1.8" height="1.8" fill="rgb(255,255,255)"/>
<rect x="616.7" y="555.1" width="1.8" height="1.8" fill="rgb(250,250,250)"/>
<rect x="615.4" y="559.1" width="1.8" height="1.8" fill="rgb(170,170,170)"/>
<rect x="616.6" y="569.3" width="1.8" height="1.8" fill="rgb(170,170,170)"/>
<rect x="616.0" y="573.2" width="1.8" height="1.8" fill="rgb(170,170,170)"/>
<rect x="620.0" y="400.3" width="1.8" height="1.8" fill="rgb(240,240,240)"/>
<rect x="619.8" y="421.9" width="1.8" height="1.8" fill="rgb(170,170,170)"/>
<rect x="620.2" y="445.9" width="1.8" height="1.8" fill="rgb(170,170,170)"/>
<rect x="619.2" y="453.0" width="1.8" height="1.8" fill="rgb(240,240,240)"/>
<rect x="618.9" y="467.9" width="1.8" height="1.8" fill="rgb(110,110,110)"/>
<rect x="619.6" y="470.2" width="1.8" height="1.8" fill="rgb(110,110,110)"/>
<rect x="619.6" y="478.2" width="1.8" height="1.8" fill="rgb(70,70,70)"/>
<rect x="618.8" y="499.9" width="1.8" height="1.8" fill="rgb(170,170,170)"/>
<rect x="620.0" y="509.0" width="1.8" height="1.8" fill="rgb(240,240,240)"/>
<rect x="619.3" y="520.2" width="1.8" height="1.8" fill="rgb(70,70,70)"/>
<rect x="619.6" y="541.6" width="1.8" height="1.8" fill="rgb(255,255,255)"/>
<rect x="619.7" y="556.5" width="1.8" height="1.8" fill="rgb(110,110,110)"/>
<rect x="620.0" y="563.2" width="1.8" height="1.8" fill="rgb(140,140,140)"/>
<rect x="623.3" y="399.9" width="1.8" height="1.8" fill="rgb(170,170,170)"/>
<rect x="623.3" y="404.2" width="1.8" height="1.8" fill="rgb(255,255,255)"/>
<rect x="623.7" y="406.5" width="1.8" height="1.8" fill="rgb(240,240,240)"/>
<rect x="623.0" y="431.4" width="1.8" height="1.8" fill="rgb(255,255,255)"/>
<rect x="622.6" y="443.2" width="1.8" height="1.8" fill="rgb(240,240,240)"/>
<rect x="622.5" y="449.0" width="1.8" height="1.8" fill="rgb(250,250,250)"/>
<rect x="623.3" y="463.1" width="1.8" height="1.8" fill="rgb(240,240,240)"/>
<rect x="622.8" y="467.0" width="1.8" height="1.8" fill="rgb(240,240,240)"/>
<rect x="623.3" y="470.1" width="1.8" height="1.8" fill="rgb(70,70,70)"/>
<rect x="623.2" y="489.2" width="1.8" height="1.8" fill="rgb(140,140,140)"/>
<rect x="623.5" y="492.0" width="1.8" height="1.8" fill="rgb(255,255,255)"/>
<rect x="623.5" y="495.9" width="1.8" height="1.8" fill="rgb(255,255,255)"/>
<rect x="622.4" y="503.2" width="1.8" height="1.8" fill="rgb(255,255,255)"/>
<rect x="622.7" y="520.2" width="1.8" height="1.8" fill="rgb(255,255,255)"/>
<rect x="623.0" y="531.1" width="1.8" height="1.8" fill="rgb(250,250,250)"/>
<rect x="622.9" y="541.7" width="1.8" height="1.8" fill="rgb(250,250,250)"/>
<rect x="623.5" y="544.6" width="1.8" height="1.8" fill="rgb(255,255,255)"/>
<rect x="622.7" y="555.1" width="1.8" height="1.8" fill="rgb(255,255,255)"/>
<rect x="622.6" y="558.9" width="1.8" height="1.8" fill="rgb(110,110,110)"/>
<rect x="623.1" y="563.6" width="1.8" height="1.8" fill="rgb(255,255,255)"/>
<rect x="627.4" y="407.7" width="1.8" height="1.8" fill="rgb(250,250,250)"/>
<rect x="627.2" y="414.9" width="1.8" height="1.8" fill="rgb(250,250,250)"/>
<rect x="626.0" y="418.2" width="1.8" height="1.8" fill="rgb(240,240,240)"/>
<rect x="625.8" y="432.3" width="1.8" height="1.8" fill="rgb(140,140,140)"/>
<rect x="627.2" y="434.9" width="1.8" height="1.8" fill="rgb(140,140,140)"/>
<rect x="626.8" y="439.0" width="1.8" height="1.8" fill="rgb(255,255,255)"/>
<rect x="626.7" y="463.9" width="1.8" height="1.8" fill="rgb(110,110,110)"/>
<rect x="626.3" y="466.5" width="1.8" height="1.8" fill="rgb(110,110,110)"/>
<rect x="626.0" y="475.1" width="1.8" height="1.8" fill="rgb(140,140,140)"/>
<rect x="625.8" y="478.0" width="1.8" height="1.8" fill="rgb(255,255,255)"/>
<rect x="626.6" y="481.3" width="1.8" height="1.8" fill="rgb(110,110,110)"/>
<rect x="626.9" y="503.4" width="1.8" height="1.8" fill="rgb(140,140,140)"/>
<rect x="626.6" y="509.9" width="1.8" height="1.8" fill="rgb(250,250,250)"/>
<rect x="625.8" y="524.4" width="1.8" height="1.8" fill="rgb(255,255,255)"/>
<rect x="627.1" y="527.9" width="1.8" height="1.8" fill="rgb(110,110,110)"/>
<rect x="625.8" y="530.3" width="1.8" height="1.8" fill="rgb(255,255,255)"/>
<rect x="626.3" y="537.3" width="1.8" height="1.8" fill="rgb(240,240,240)"/>
<rect x="625.9" y="541.4" width="1.8" height="1.8" fill="rgb(255,255,255)"/>
<rect x="626.2" y="552.2" width="1.8" height="1.8" fill="rgb(250,250,250)"/>
<rect x="630.4" y="406.7" width="1.8" height="1.8" fill="rgb(170,170,170)"/>
<rect x="630.5" y="414.1" width="1.8" height="1.8" fill="rgb(70,70,70)"/>
<rect x="629.4" y="417.0" width="1.8" height="1.8" fill="rgb(255,255,255)"/>
<rect x="630.7" y="425.5" width="1.8" height="1.8" fill="rgb(250,250,250)"/>
<rect x="629.5" y="427.8" width="1.8" height="1.8" fill="rgb(250,250,250)"/>
<rect x="630.4" y="436.0" width="1.8" height="1.8" fill="rgb(255,255,255)"/>
<rect x="629.9" y="439.3" width="1.8" height="1.8" fill="rgb(140,140,140)"/>
<rect x="630.2" y="453.2" width="1.8" height="1.8" fill="rgb(255,255,255)"/>
<rect x="629.7" y="456.0" width="1.8" height="1.8" fill="rgb(70,70,70)"/>
<rect x="629.4" y="459.9" width="1.8" height="1.8" fill="rgb(255,255,255)"/>
<rect x="629.6" y="464.5" width="1.8" height="1.8" fill="rgb(110,110,110)"/>
<rect x="629.8" y="467.7" width="1.8" height="1.8" fill="rgb(255,255,255)"/>
<rect x="630.0" y="485.5" width="1.8" height="1.8" fill="rgb(70,70,70)"/>
<rect x="630.8" y="517.4" width="1.8" height="1.8" fill="rgb(140,140,140)"/>
<rect x="630.1" y="520.5" width="1.8" height="1.8" fill="rgb(140,140,140)"/>
<rect x="630.1" y="533.9" width="1.8" height="1.8" fill="rgb(255,255,255)"/>
<rect x="630.4" y="538.4" width="1.8" height="1.8" fill="rgb(255,255,255)"/>
<rect x="629.8" y="541.7" width="1.8" height="1.8" fill="rgb(255,255,255)"/>
<rect x="629.4" y="544.9" width="1.8" height="1.8" fill="rgb(70,70,70)"/>
<rect x="630.0" y="551.6" width="1.8" height="1.8" fill="rgb(170,170,170)"/>
<rect x="630.4" y="569.9" width="1.8" height="1.8" fill="rgb(170,170,170)"/>
<rect x="634.0" y="406.4" width="1.8" height="1.8" fill="rgb(255,255,255)"/>
<rect x="633.9" y="410.6" width="1.8" height="1.8" fill="rgb(255,255,255)"/>
<rect x="633.9" y="417.1" width="1.8" height="1.8" fill="rgb(255,255,255)"/>
<rect x="633.4" y="420.8" width="1.8" height="1.8" fill="rgb(240,240,240)"/>
<rect x="634.0" y="427.6" width="1.8" height="1.8" fill="rgb(255,255,255)"/>
<rect x="633.9" y="446.5" width="1.8" height="1.8" fill="rgb(255,255,255)"/>
<rect x="633.6" y="449.5" width="1.8" height="1.8" fill="rgb(70,70,70)"/>
<rect x="633.9" y="453.4" width="1.8" height="1.8" fill="rgb(250,250,250)"/>
<rect x="633.5" y="481.2" width="1.8" height="1.8" fill="rgb(240,240,240)"/>
<rect x="633.7" y="485.7" width="1.8" height="1.8" fill="rgb(255,255,255)"/>
<rect x="633.2" y="489.2" width="1.8" height="1.8" fill="rgb(110,110,110)"/>
<rect x="633.1" y="492.0" width="1.8" height="1.8" fill="rgb(255,255,255)"/>
<rect x="634.4" y="512.9" width="1.8" height="1.8" fill="rgb(70,70,70)"/>
<rect x="633.0" y="520.3" width="1.8" height="1.8" fill="rgb(70,70,70)"/>
<rect x="633.8" y="528.0" width="1.8" height="1.8" fill="rgb(255,255,255)"/>
<rect x="633.0" y="549.4" width="1.8" height="1.8" fill="rgb(255,255,255)"/>
<rect x="634.4" y="552.8" width="1.8" height="1.8" fill="rgb(110,110,110)"/>
<rect x="633.4" y="555.0" width="1.8" height="1.8" fill="rgb(255,255,255)"/>
<rect x="633.8" y="559.7" width="1.8" height="1.8" fill="rgb(170,170,170)"/>
<rect x="633.3" y="563.3" width="1.8" height="1.8" fill="rgb(255,255,255)"/>
<rect x="637.7" y="404.2" width="1.8" height="1.8" fill="rgb(110,110,110)"/>
<rect x="637.6" y="406.8" width="1.8" height="1.8" fill="rgb(255,255,255)"/>
<rect x="637.6" y="414.2" width="1.8" height="1.8" fill="rgb(250,250,250)"/>
<rect x="637.3" y="417.5" width="1.8" height="1.8" fill="rgb(250,250,250)"/>
<rect x="636.8" y="424.6" width="1.8" height="1.8" fill="rgb(170,170,170)"/>
<rect x="636.5" y="431.4" width="1.8" height="1.8" fill="rgb(110,110,110)"/>
<rect x="637.3" y="435.8" width="1.8" height="1.8" fill="rgb(250,250,250)"/>
<rect x="637.3" y="438.6" width="1.8" height="1.8" fill="rgb(255,255,255)"/>
<rect x="637.6" y="446.2" width="1.8" height="1.8" fill="rgb(255,255,255)"/>
<rect x="637.4" y="457.3" width="1.8" height="1.8" fill="rgb(240,240,240)"/>
<rect x="637.8" y="460.9" width="1.8" height="1.8" fill="rgb(110,110,110)"/>
<rect x="638.0" y="467.4" width="1.8" height="1.8" fill="rgb(250,250,250)"/>
<rect x="637.0" y="484.8" width="1.8" height="1.8" fill="rgb(170,170,170)"/>
<rect x="636.7" y="487.8" width="1.8" height="1.8" fill="rgb(70,70,70)"/>
<rect x="637.5" y="494.8" width="1.8" height="1.8" fill="rgb(250,250,250)"/>
<rect x="636.7" y="499.5" width="1.8" height="1.8" fill="rgb(250,250,250)"/>
<rect x="637.7" y="503.3" width="1.8" height="1.8" fill="rgb(250,250,250)"/>
<rect x="636.4" y="506.9" width="1.8" height="1.8" fill="rgb(240,240,240)"/>
<rect x="637.1" y="520.9" width="1.8" height="1.8" fill="rgb(140,140,140)"/>
<rect x="637.6" y="527.2" width="1.8" height="1.8" fill="rgb(255,255,255)"/>
<rect x="637.0" y="530.6" width="1.8" height="1.8" fill="rgb(70,70,70)"/>
<rect x="637.8" y="534.9" width="1.8" height="1.8" fill="rgb(255,255,255)"/>
<rect x="637.3" y="545.0" width="1.8" height="1.8" fill="rgb(255,255,255)"/>
<rect x="636.8" y="552.5" width="1.8" height="1.8" fill="rgb(250,250,250)"/>
<rect x="637.8" y="577.6" width="1.8" height="1.8" fill="rgb(255,255,255)"/>
<rect x="640.8" y="407.2" width="1.8" height="1.8" fill="rgb(170,170,170)"/>
<rect x="640.8" y="417.5" width="1.8" height="1.8" fill="rgb(255,255,255)"/>
<rect x="641.0" y="421.6" width="1.8" height="1.8" fill="rgb(255,255,255)"/>
<rect x="640.9" y="428.6" width="1.8" height="1.8" fill="rgb(170,170,170)"/>
<rect x="640.1" y="431.5" width="1.8" height="1.8" fill="rgb(255,255,255)"/>
<rect x="640.4" y="438.7" width="1.8" height="1.8" fill="rgb(255,255,255)"/>
<rect x="640.2" y="456.6" width="1.8" height="1.8" fill="rgb(255,255,255)"/>
<rect x="640.5" y="463.9" width="1.8" height="1.8" fill="rgb(70,70,70)"/>
<rect x="640.0" y="467.6" width="1.8" height="1.8" fill="rgb(110,110,110)"/>
<rect x="641.4" y="474.4" width="1.8" height="1.8" fill="rgb(140,140,140)"/>
<rect x="640.4" y="478.4" width="1.8" height="1.8" fill="rgb(140,140,140)"/>
<rect x="640.0" y="480.7" width="1.8" height="1.8" fill="rgb(140,140,140)"/>
<rect x="641.2" y="485.2" width="1.8" height="1.8" fill="rgb(255,255,255)"/>
<rect x="641.0" y="489.3" width="1.8" height="1.8" fill="rgb(140,140,140)"/>
<rect x="641.0" y="502.5" width="1.8" height="1.8" fill="rgb(70,70,70)"/>
<rect x="640.3" y="505.9" width="1.8" height="1.8" fill="rgb(110,110,110)"/>
<rect x="640.4" y="513.9" width="1.8" height="1.8" fill="rgb(255,255,255)"/>
<rect x="640.3" y="533.8" width="1.8" height="1.8" fill="rgb(170,170,170)"/>
<rect x="640.4" y="556.0" width="1.8" height="1.8" fill="rgb(170,170,170)"/>
<rect x="644.1" y="414.2" width="1.8" height="1.8" fill="rgb(140,140,140)"/>
<rect x="643.7" y="418.2" width="1.8" height="1.8" fill="rgb(110,110,110)"/>
<rect x="643.9" y="425.2" width="1.8" height="1.8" fill="rgb(140,140,140)"/>
<rect x="644.6" y="439.1" width="1.8" height="1.8" fill="rgb(240,240,240)"/>
<rect x="645.1" y="443.0" width="1.8" height="1.8" fill="rgb(140,140,140)"/>
<rect x="644.4" y="452.7" width="1.8" height="1.8" fill="rgb(255,255,255)"/>
<rect x="643.8" y="456.6" width="1.8" height="1.8" fill="rgb(70,70,70)"/>
<rect x="643.9" y="460.0" width="1.8" height="1.8" fill="rgb(170,170,170)"/>
<rect x="644.6" y="471.0" width="1.8" height="1.8" fill="rgb(255,255,255)"/>
<rect x="644.6" y="482.0" width="1.8" height="1.8" fill="rgb(255,255,255)"/>
<rect x="644.5" y="492.7" width="1.8" height="1.8" fill="rgb(170,170,170)"/>
<rect x="643.7" y="495.8" width="1.8" height="1.8" fill="rgb(255,255,255)"/>
<rect x="644.1" y="498.6" width="1.8" height="1.8" fill="rgb(250,250,250)"/>
<rect x="643.5" y="506.2" width="1.8" height="1.8" fill="rgb(240,240,240)"/>
<rect x="643.7" y="527.7" width="1.8" height="1.8" fill="rgb(255,255,255)"/>
<rect x="644.4" y="531.1" width="1.8" height="1.8" fill="rgb(255,255,255)"/>
<rect x="645.0" y="534.2" width="1.8" height="1.8" fill="rgb(255,255,255)"/>
<rect x="644.5" y="549.0" width="1.8" height="1.8" fill="rgb(240,240,240)"/>
<rect x="643.9" y="556.5" width="1.8" height="1.8" fill="rgb(255,255,255)"/>
<rect x="644.1" y="577.7" width="1.8" height="1.8" fill="rgb(70,70,70)"/>
<rect x="647.2" y="404.2" width="1.8" height="1.8" fill="rgb(110,110,110)"/>
<rect x="647.1" y="417.8" width="1.8" height="1.8" fill="rgb(250,250,250)"/>
<rect x="647.8" y="421.9" width="1.8" height="1.8" fill="rgb(170,170,170)"/>
<rect x="647.1" y="438.8" width="1.8" height="1.8" fill="rgb(70,70,70)"/>
<rect x="648.3" y="442.1" width="1.8" height="1.8" fill="rgb(255,255,255)"/>
<rect x="647.7" y="457.0" width="1.8" height="1.8" fill="rgb(255,255,255)"/>
<rect x="647.4" y="463.6" width="1.8" height="1.8" fill="rgb(255,255,255)"/>
<rect x="648.3" y="478.1" width="1.8" height="1.8" fill="rgb(255,255,255)"/>
<rect x="647.7" y="484.8" width="1.8" height="1.8" fill="rgb(250,250,250)"/>
<rect x="648.5" y="502.8" width="1.8" height="1.8" fill="rgb(140,140,140)"/>
<rect x="648.6" y="506.3" width="1.8" height="1.8" fill="rgb(255,255,255)"/>
<rect x="648.6" y="541.4" width="1.8" height="1.8" fill="rgb(110,110,110)"/>
<rect x="647.7" y="551.7" width="1.8" height="1.8" fill="rgb(240,240,240)"/>
<rect x="648.5" y="556.5" width="1.8" height="1.8" fill="rgb(70,70,70)"/>
<rect x="647.8" y="559.8" width="1.8" height="1.8" fill="rgb(140,140,140)"/>
<rect x="647.9" y="563.5" width="1.8" height="1.8" fill="rgb(255,255,255)"/>
<rect x="651.4" y="402.9" width="1.8" height="1.8" fill="rgb(110,110,110)"/>
<rect x="651.1" y="407.3" width="1.8" height="1.8" fill="rgb(140,140,140)"/>
<rect x="651.3" y="413.8" width="1.8" height="1.8" fill="rgb(110,110,110)"/>
<rect x="651.4" y="421.2" width="1.8" height="1.8" fill="rgb(170,170,170)"/>
<rect x="651.8" y="432.4" width="1.8" height="1.8" fill="rgb(170,170,170)"/>
<rect x="652.1" y="457.3" width="1.8" height="1.8" fill="rgb(140,140,140)"/>
<rect x="652.0" y="463.8" width="1.8" height="1.8" fill="rgb(170,170,170)"/>
<rect x="651.8" y="481.0" width="1.8" height="1.8" fill="rgb(110,110,110)"/>
<rect x="651.3" y="531.0" width="1.8" height="1.8" fill="rgb(240,240,240)"/>
<rect x="651.8" y="570.5" width="1.8" height="1.8" fill="rgb(140,140,140)"/>
<rect x="651.5" y="577.1" width="1.8" height="1.8" fill="rgb(70,70,70)"/>
<rect x="655.5" y="410.3" width="1.8" height="1.8" fill="rgb(255,255,255)"/>
<rect x="654.3" y="414.4" width="1.8" height="1.8" fill="rgb(255,255,255)"/>
<rect x="654.1" y="417.3" width="1.8" height="1.8" fill="rgb(240,240,240)"/>
<rect x="655.6" y="424.9" width="1.8" height="1.8" fill="rgb(110,110,110)"/>
<rect x="654.3" y="432.5" width="1.8" height="1.8" fill="rgb(110,110,110)"/>
<rect x="654.6" y="445.3" width="1.8" height="1.8" fill="rgb(255,255,255)"/>
<rect x="654.2" y="459.7" width="1.8" height="1.8" fill="rgb(70,70,70)"/>
<rect x="654.8" y="470.5" width="1.8" height="1.8" fill="rgb(255,255,255)"/>
<rect x="654.3" y="474.1" width="1.8" height="1.8" fill="rgb(240,240,240)"/>
<rect x="655.6" y="478.1" width="1.8" height="1.8" fill="rgb(140,140,140)"/>
<rect x="654.5" y="485.7" width="1.8" height="1.8" fill="rgb(255,255,255)"/>
<rect x="654.2" y="492.4" width="1.8" height="1.8" fill="rgb(70,70,70)"/>
<rect x="654.2" y="494.9" width="1.8" height="1.8" fill="rgb(255,255,255)"/>
<rect x="654.2" y="499.3" width="1.8" height="1.8" fill="rgb(170,170,170)"/>
<rect x="655.1" y="505.5" width="1.8" height="1.8" fill="rgb(255,255,255)"/>
<rect x="655.2" y="524.6" width="1.8" height="1.8" fill="rgb(70,70,70)"/>
<rect x="655.1" y="534.3" width="1.8" height="1.8" fill="rgb(255,255,255)"/>
<rect x="655.4" y="542.4" width="1.8" height="1.8" fill="rgb(255,255,255)"/>
<rect x="654.7" y="551.4" width="1.8" height="1.8" fill="rgb(255,255,255)"/>
<rect x="655.7" y="555.9" width="1.8" height="1.8" fill="rgb(170,170,170)"/>
<rect x="658.9" y="418.2" width="1.8" height="1.8" fill="rgb(140,140,140)"/>
<rect x="657.8" y="425.2" width="1.8" height="1.8" fill="rgb(255,255,255)"/>
<rect x="658.7" y="450.2" width="1.8" height="1.8" fill="rgb(240,240,240)"/>
<rect x="658.7" y="459.8" width="1.8" height="1.8" fill="rgb(70,70,70)"/>
<rect x="659.0" y="463.2" width="1.8" height="1.8" fill="rgb(255,255,255)"/>
<rect x="657.9" y="477.8" width="1.8" height="1.8" fill="rgb(140,140,140)"/>
<rect x="657.6" y="492.8" width="1.8" height="1.8" fill="rgb(255,255,255)"/>
<rect x="658.6" y="499.3" width="1.8" height="1.8" fill="rgb(240,240,240)"/>
<rect x="658.3" y="509.8" width="1.8" height="1.8" fill="rgb(240,240,240)"/>
<rect x="657.7" y="517.0" width="1.8" height="1.8" fill="rgb(70,70,70)"/>
<rect x="659.1" y="542.2" width="1.8" height="1.8" fill="rgb(70,70,70)"/>
<rect x="657.7" y="552.1" width="1.8" height="1.8" fill="rgb(240,240,240)"/>
<rect x="657.9" y="566.4" width="1.8" height="1.8" fill="rgb(110,110,110)"/>
<rect x="657.7" y="576.4" width="1.8" height="1.8" fill="rgb(255,255,255)"/>
<rect x="662.6" y="399.8" width="1.8" height="1.8" fill="rgb(140,140,140)"/>
<rect x="661.7" y="411.2" width="1.8" height="1.8" fill="rgb(255,255,255)"/>
<rect x="661.4" y="417.9" width="1.8" height="1.8" fill="rgb(140,140,140)"/>
<rect x="662.6" y="428.6" width="1.8" height="1.8" fill="rgb(140,140,140)"/>
<rect x="662.5" y="432.4" width="1.8" height="1.8" fill="rgb(170,170,170)"/>
<rect x="661.6" y="442.9" width="1.8" height="1.8" fill="rgb(240,240,240)"/>
<rect x="662.4" y="446.7" width="1.8" height="1.8" fill="rgb(240,240,240)"/>
<rect x="661.7" y="449.7" width="1.8" height="1.8" fill="rgb(255,255,255)"/>
<rect x="661.8" y="457.4" width="1.8" height="1.8" fill="rgb(255,255,255)"/>
<rect x="662.5" y="460.6" width="1.8" height="1.8" fill="rgb(255,255,255)"/>
<rect x="662.0" y="464.2" width="1.8" height="1.8" fill="rgb(110,110,110)"/>
<rect x="662.5" y="478.1" width="1.8" height="1.8" fill="rgb(255,255,255)"/>
<rect x="662.3" y="482.0" width="1.8" height="1.8" fill="rgb(255,255,255)"/>
<rect x="662.2" y="510.4" width="1.8" height="1.8" fill="rgb(240,240,240)"/>
<rect x="661.5" y="517.2" width="1.8" height="1.8" fill="rgb(170,170,170)"/>
<rect x="662.6" y="520.1" width="1.8" height="1.8" fill="rgb(70,70,70)"/>
<rect x="661.6" y="530.4" width="1.8" height="1.8" fill="rgb(140,140,140)"/>
<rect x="662.6" y="537.3" width="1.8" height="1.8" fill="rgb(140,140,140)"/>
<rect x="662.1" y="542.3" width="1.8" height="1.8" fill="rgb(250,250,250)"/>
<rect x="661.4" y="555.2" width="1.8" height="1.8" fill="rgb(240,240,240)"/>
<rect x="665.2" y="414.1" width="1.8" height="1.8" fill="rgb(170,170,170)"/>
<rect x="665.2" y="417.1" width="1.8" height="1.8" fill="rgb(240,240,240)"/>
<rect x="665.7" y="421.3" width="1.8" height="1.8" fill="rgb(240,240,240)"/>
<rect x="664.9" y="438.7" width="1.8" height="1.8" fill="rgb(170,170,170)"/>
<rect x="666.0" y="442.4" width="1.8" height="1.8" fill="rgb(255,255,255)"/>
<rect x="665.5" y="453.5" width="1.8" height="1.8" fill="rgb(255,255,255)"/>
<rect x="666.1" y="459.7" width="1.8" height="1.8" fill="rgb(140,140,140)"/>
<rect x="666.0" y="475.1" width="1.8" height="1.8" fill="rgb(250,250,250)"/>
<rect x="665.7" y="506.2" width="1.8" height="1.8" fill="rgb(140,140,140)"/>
<rect x="665.3" y="512.9" width="1.8" height="1.8" fill="rgb(255,255,255)"/>
<rect x="665.7" y="520.2" width="1.8" height="1.8" fill="rgb(255,255,255)"/>
<rect x="665.6" y="527.6" width="1.8" height="1.8" fill="rgb(170,170,170)"/>
<rect x="665.5" y="549.4" width="1.8" height="1.8" fill="rgb(170,170,170)"/>
<rect x="665.7" y="552.9" width="1.8" height="1.8" fill="rgb(170,170,170)"/>
<rect x="665.5" y="555.6" width="1.8" height="1.8" fill="rgb(255,255,255)"/>
<rect x="665.0" y="569.9" width="1.8" height="1.8" fill="rgb(170,170,170)"/>
<rect x="669.0" y="399.5" width="1.8" height="1.8" fill="rgb(240,240,240)"/>
<rect x="668.6" y="410.3" width="1.8" height="1.8" fill="rgb(255,255,255)"/>
<rect x="668.8" y="414.1" width="1.8" height="1.8" fill="rgb(255,255,255)"/>
<rect x="669.4" y="421.8" width="1.8" height="1.8" fill="rgb(170,170,170)"/>
<rect x="668.3" y="425.3" width="1.8" height="1.8" fill="rgb(110,110,110)"/>
<rect x="668.5" y="442.8" width="1.8" height="1.8" fill="rgb(255,255,255)"/>
<rect x="669.4" y="463.6" width="1.8" height="1.8" fill="rgb(255,255,255)"/>
<rect x="669.7" y="477.7" width="1.8" height="1.8" fill="rgb(70,70,70)"/>
<rect x="668.6" y="516.2" width="1.8" height="1.8" fill="rgb(255,255,255)"/>
<rect x="669.0" y="527.2" width="1.8" height="1.8" fill="rgb(140,140,140)"/>
<rect x="668.7" y="531.3" width="1.8" height="1.8" fill="rgb(250,250,250)"/>
<rect x="668.7" y="556.3" width="1.8" height="1.8" fill="rgb(255,255,255)"/>
<rect x="669.8" y="558.7" width="1.8" height="1.8" fill="rgb(110,110,110)"/>
<rect x="669.8" y="570.2" width="1.8" height="1.8" fill="rgb(140,140,140)"/>
<rect x="669.7" y="574.1" width="1.8" height="1.8" fill="rgb(170,170,170)"/>
<rect x="672.9" y="407.0" width="1.8" height="1.8" fill="rgb(110,110,110)"/>
<rect x="673.0" y="425.0" width="1.8" height="1.8" fill="rgb(255,255,255)"/>
<rect x="672.8" y="438.9" width="1.8" height="1.8" fill="rgb(140,140,140)"/>
<rect x="673.2" y="445.8" width="1.8" height="1.8" fill="rgb(170,170,170)"/>
<rect x="672.2" y="459.7" width="1.8" height="1.8" fill="rgb(240,240,240)"/>
<rect x="673.1" y="463.5" width="1.8" height="1.8" fill="rgb(255,255,255)"/>
<rect x="673.1" y="484.2" width="1.8" height="1.8" fill="rgb(70,70,70)"/>
<rect x="672.8" y="488.0" width="1.8" height="1.8" fill="rgb(170,170,170)"/>
<rect x="671.9" y="503.1" width="1.8" height="1.8" fill="rgb(110,110,110)"/>
<rect x="673.1" y="506.4" width="1.8" height="1.8" fill="rgb(110,110,110)"/>
<rect x="672.2" y="513.2" width="1.8" height="1.8" fill="rgb(250,250,250)"/>
<rect x="671.8" y="516.9" width="1.8" height="1.8" fill="rgb(140,140,140)"/>
<rect x="672.5" y="527.5" width="1.8" height="1.8" fill="rgb(240,240,240)"/>
<rect x="672.4" y="530.2" width="1.8" height="1.8" fill="rgb(255,255,255)"/>
<rect x="672.1" y="535.3" width="1.8" height="1.8" fill="rgb(255,255,255)"/>
<rect x="673.3" y="542.3" width="1.8" height="1.8" fill="rgb(255,255,255)"/>
<rect x="673.1" y="569.6" width="1.8" height="1.8" fill="rgb(70,70,70)"/>
<rect x="676.4" y="399.8" width="1.8" height="1.8" fill="rgb(170,170,170)"/>
<rect x="676.7" y="407.4" width="1.8" height="1.8" fill="rgb(140,140,140)"/>
<rect x="676.9" y="411.4" width="1.8" height="1.8" fill="rgb(250,250,250)"/>
<rect x="676.5" y="414.6" width="1.8" height="1.8" fill="rgb(255,255,255)"/>
<rect x="676.4" y="420.7" width="1.8" height="1.8" fill="rgb(140,140,140)"/>
<rect x="676.7" y="424.8" width="1.8" height="1.8" fill="rgb(110,110,110)"/>
<rect x="676.7" y="427.6" width="1.8" height="1.8" fill="rgb(255,255,255)"/>
<rect x="675.8" y="431.2" width="1.8" height="1.8" fill="rgb(250,250,250)"/>
<rect x="675.4" y="439.1" width="1.8" height="1.8" fill="rgb(140,140,140)"/>
<rect x="676.1" y="441.9" width="1.8" height="1.8" fill="rgb(140,140,140)"/>
<rect x="675.5" y="467.7" width="1.8" height="1.8" fill="rgb(70,70,70)"/>
<rect x="676.6" y="474.6" width="1.8" height="1.8" fill="rgb(110,110,110)"/>
<rect x="676.7" y="496.3" width="1.8" height="1.8" fill="rgb(70,70,70)"/>
<rect x="676.6" y="509.9" width="1.8" height="1.8" fill="rgb(255,255,255)"/>
<rect x="676.1" y="517.1" width="1.8" height="1.8" fill="rgb(255,255,255)"/>
<rect x="676.8" y="520.0" width="1.8" height="1.8" fill="rgb(250,250,250)"/>
<rect x="676.8" y="527.7" width="1.8" height="1.8" fill="rgb(255,255,255)"/>
<rect x="676.6" y="530.5" width="1.8" height="1.8" fill="rgb(255,255,255)"/>
<rect x="676.9" y="535.1" width="1.8" height="1.8" fill="rgb(240,240,240)"/>
<rect x="676.6" y="542.0" width="1.8" height="1.8" fill="rgb(110,110,110)"/>
<rect x="676.1" y="549.3" width="1.8" height="1.8" fill="rgb(250,250,250)"/>
<rect x="676.3" y="577.4" width="1.8" height="1.8" fill="rgb(255,255,255)"/>
<rect x="679.1" y="407.9" width="1.8" height="1.8" fill="rgb(255,255,255)"/>
<rect x="680.1" y="410.7" width="1.8" height="1.8" fill="rgb(255,255,255)"/>
<rect x="680.1" y="424.7" width="1.8" height="1.8" fill="rgb(110,110,110)"/>
<rect x="679.9" y="435.6" width="1.8" height="1.8" fill="rgb(255,255,255)"/>
<rect x="680.1" y="439.7" width="1.8" height="1.8" fill="rgb(255,255,255)"/>
<rect x="679.5" y="453.0" width="1.8" height="1.8" fill="rgb(70,70,70)"/>
<rect x="680.1" y="467.4" width="1.8" height="1.8" fill="rgb(70,70,70)"/>
<rect x="679.6" y="474.1" width="1.8" height="1.8" fill="rgb(255,255,255)"/>
<rect x="679.8" y="488.2" width="1.8" height="1.8" fill="rgb(70,70,70)"/>
<rect x="679.9" y="499.0" width="1.8" height="1.8" fill="rgb(110,110,110)"/>
<rect x="679.1" y="516.5" width="1.8" height="1.8" fill="rgb(170,170,170)"/>
<rect x="679.7" y="523.5" width="1.8" height="1.8" fill="rgb(255,255,255)"/>
<rect x="679.8" y="530.3" width="1.8" height="1.8" fill="rgb(240,240,240)"/>
<rect x="679.1" y="535.3" width="1.8" height="1.8" fill="rgb(70,70,70)"/>
<rect x="680.5" y="552.2" width="1.8" height="1.8" fill="rgb(250,250,250)"/>
<rect x="680.1" y="555.5" width="1.8" height="1.8" fill="rgb(250,250,250)"/>
<rect x="678.9" y="573.4" width="1.8" height="1.8" fill="rgb(255,255,255)"/>
<rect x="682.9" y="406.6" width="1.8" height="1.8" fill="rgb(255,255,255)"/>
<rect x="683.2" y="421.3" width="1.8" height="1.8" fill="rgb(255,255,255)"/>
<rect x="683.9" y="429.0" width="1.8" height="1.8" fill="rgb(70,70,70)"/>
<rect x="682.8" y="432.4" width="1.8" height="1.8" fill="rgb(170,170,170)"/>
<rect x="682.8" y="439.6" width="1.8" height="1.8" fill="rgb(110,110,110)"/>
<rect x="682.9" y="456.7" width="1.8" height="1.8" fill="rgb(240,240,240)"/>
<rect x="682.6" y="467.6" width="1.8" height="1.8" fill="rgb(110,110,110)"/>
<rect x="683.8" y="480.9" width="1.8" height="1.8" fill="rgb(255,255,255)"/>
<rect x="682.5" y="484.3" width="1.8" height="1.8" fill="rgb(140,140,140)"/>
<rect x="683.7" y="509.9" width="1.8" height="1.8" fill="rgb(255,255,255)"/>
<rect x="683.4" y="513.1" width="1.8" height="1.8" fill="rgb(140,140,140)"/>
<rect x="683.3" y="530.3" width="1.8" height="1.8" fill="rgb(110,110,110)"/>
<rect x="683.3" y="537.4" width="1.8" height="1.8" fill="rgb(255,255,255)"/>
<rect x="683.3" y="541.9" width="1.8" height="1.8" fill="rgb(250,250,250)"/>
<rect x="683.0" y="552.2" width="1.8" height="1.8" fill="rgb(170,170,170)"/>
<rect x="682.7" y="574.0" width="1.8" height="1.8" fill="rgb(70,70,70)"/>
<rect x="686.8" y="400.6" width="1.8" height="1.8" fill="rgb(110,110,110)"/>
<rect x="686.5" y="413.7" width="1.8" height="1.8" fill="rgb(110,110,110)"/>
<rect x="686.4" y="417.4" width="1.8" height="1.8" fill="rgb(110,110,110)"/>
<rect x="687.6" y="421.6" width="1.8" height="1.8" fill="rgb(250,250,250)"/>
<rect x="686.0" y="438.3" width="1.8" height="1.8" fill="rgb(240,240,240)"/>
<rect x="687.0" y="441.7" width="1.8" height="1.8" fill="rgb(240,240,240)"/>
<rect x="686.1" y="450.2" width="1.8" height="1.8" fill="rgb(70,70,70)"/>
<rect x="686.6" y="459.4" width="1.8" height="1.8" fill="rgb(255,255,255)"/>
<rect x="686.2" y="464.5" width="1.8" height="1.8" fill="rgb(240,240,240)"/>
<rect x="687.4" y="467.1" width="1.8" height="1.8" fill="rgb(140,140,140)"/>
<rect x="687.2" y="474.3" width="1.8" height="1.8" fill="rgb(255,255,255)"/>
<rect x="686.2" y="481.9" width="1.8" height="1.8" fill="rgb(140,140,140)"/>
<rect x="686.7" y="485.2" width="1.8" height="1.8" fill="rgb(255,255,255)"/>
<rect x="686.6" y="491.8" width="1.8" height="1.8" fill="rgb(170,170,170)"/>
<rect x="687.4" y="503.1" width="1.8" height="1.8" fill="rgb(250,250,250)"/>
<rect x="686.9" y="507.0" width="1.8" height="1.8" fill="rgb(110,110,110)"/>
<rect x="687.5" y="513.5" width="1.8" height="1.8" fill="rgb(170,170,170)"/>
<rect x="686.2" y="516.1" width="1.8" height="1.8" fill="rgb(170,170,170)"/>
<rect x="687.3" y="521.1" width="1.8" height="1.8" fill="rgb(110,110,110)"/>
<rect x="687.1" y="523.2" width="1.8" height="1.8" fill="rgb(140,140,140)"/>
<rect x="686.8" y="530.7" width="1.8" height="1.8" fill="rgb(140,140,140)"/>
<rect x="686.8" y="541.5" width="1.8" height="1.8" fill="rgb(70,70,70)"/>
<rect x="687.1" y="545.1" width="1.8" height="1.8" fill="rgb(250,250,250)"/>
<rect x="686.2" y="562.7" width="1.8" height="1.8" fill="rgb(70,70,70)"/>
<rect x="686.6" y="567.2" width="1.8" height="1.8" fill="rgb(170,170,170)"/>
<rect x="686.8" y="570.7" width="1.8" height="1.8" fill="rgb(110,110,110)"/>
<rect x="686.1" y="573.7" width="1.8" height="1.8" fill="rgb(240,240,240)"/>
<rect x="686.9" y="577.6" width="1.8" height="1.8" fill="rgb(240,240,240)"/>
<rect x="690.5" y="403.3" width="1.8" height="1.8" fill="rgb(110,110,110)"/>
<rect x="689.8" y="417.2" width="1.8" height="1.8" fill="rgb(140,140,140)"/>
<rect x="691.0" y="420.7" width="1.8" height="1.8" fill="rgb(170,170,170)"/>
<rect x="690.7" y="425.0" width="1.8" height="1.8" fill="rgb(70,70,70)"/>
<rect x="691.0" y="432.0" width="1.8" height="1.8" fill="rgb(110,110,110)"/>
<rect x="690.3" y="446.8" width="1.8" height="1.8" fill="rgb(170,170,170)"/>
<rect x="689.7" y="464.5" width="1.8" height="1.8" fill="rgb(140,140,140)"/>
<rect x="690.7" y="474.4" width="1.8" height="1.8" fill="rgb(110,110,110)"/>
<rect x="690.7" y="478.6" width="1.8" height="1.8" fill="rgb(70,70,70)"/>
<rect x="690.2" y="481.6" width="1.8" height="1.8" fill="rgb(70,70,70)"/>
<rect x="689.5" y="484.9" width="1.8" height="1.8" fill="rgb(240,240,240)"/>
<rect x="690.3" y="489.2" width="1.8" height="1.8" fill="rgb(170,170,170)"/>
<rect x="690.7" y="492.8" width="1.8" height="1.8" fill="rgb(255,255,255)"/>
<rect x="691.0" y="495.5" width="1.8" height="1.8" fill="rgb(70,70,70)"/>
<rect x="690.5" y="502.1" width="1.8" height="1.8" fill="rgb(70,70,70)"/>
<rect x="690.1" y="510.2" width="1.8" height="1.8" fill="rgb(110,110,110)"/>
<rect x="690.9" y="513.3" width="1.8" height="1.8" fill="rgb(255,255,255)"/>
<rect x="690.6" y="516.1" width="1.8" height="1.8" fill="rgb(250,250,250)"/>
<rect x="689.8" y="519.6" width="1.8" height="1.8" fill="rgb(170,170,170)"/>
<rect x="689.8" y="524.5" width="1.8" height="1.8" fill="rgb(140,140,140)"/>
<rect x="691.0" y="531.0" width="1.8" height="1.8" fill="rgb(255,255,255)"/>
<rect x="690.6" y="538.2" width="1.8" height="1.8" fill="rgb(255,255,255)"/>
<rect x="690.5" y="542.1" width="1.8" height="1.8" fill="rgb(110,110,110)"/>
<rect x="690.9" y="547.9" width="1.8" height="1.8" fill="rgb(70,70,70)"/>
<rect x="690.7" y="573.3" width="1.8" height="1.8" fill="rgb(110,110,110)"/>
<rect x="689.7" y="577.2" width="1.8" height="1.8" fill="rgb(240,240,240)"/>
<rect x="693.9" y="404.1" width="1.8" height="1.8" fill="rgb(170,170,170)"/>
<rect x="694.5" y="421.8" width="1.8" height="1.8" fill="rgb(140,140,140)"/>
<rect x="694.0" y="429.0" width="1.8" height="1.8" fill="rgb(70,70,70)"/>
<rect x="693.8" y="436.2" width="1.8" height="1.8" fill="rgb(140,140,140)"/>
<rect x="693.3" y="449.1" width="1.8" height="1.8" fill="rgb(255,255,255)"/>
<rect x="694.5" y="453.7" width="1.8" height="1.8" fill="rgb(255,255,255)"/>
<rect x="693.8" y="464.2" width="1.8" height="1.8" fill="rgb(250,250,250)"/>
<rect x="693.9" y="466.7" width="1.8" height="1.8" fill="rgb(170,170,170)"/>
<rect x="693.9" y="480.8" width="1.8" height="1.8" fill="rgb(255,255,255)"/>
<rect x="693.9" y="496.3" width="1.8" height="1.8" fill="rgb(255,255,255)"/>
<rect x="693.3" y="502.6" width="1.8" height="1.8" fill="rgb(255,255,255)"/>
<rect x="693.3" y="507.0" width="1.8" height="1.8" fill="rgb(250,250,250)"/>
<rect x="694.0" y="509.6" width="1.8" height="1.8" fill="rgb(140,140,140)"/>
<rect x="693.2" y="534.6" width="1.8" height="1.8" fill="rgb(140,140,140)"/>
<rect x="693.5" y="538.2" width="1.8" height="1.8" fill="rgb(70,70,70)"/>
<rect x="694.2" y="549.4" width="1.8" height="1.8" fill="rgb(110,110,110)"/>
<rect x="694.1" y="552.3" width="1.8" height="1.8" fill="rgb(255,255,255)"/>
<rect x="694.0" y="563.3" width="1.8" height="1.8" fill="rgb(255,255,255)"/>
<rect x="693.2" y="569.9" width="1.8" height="1.8" fill="rgb(170,170,170)"/>
<rect x="696.8" y="403.5" width="1.8" height="1.8" fill="rgb(255,255,255)"/>
<rect x="697.0" y="406.4" width="1.8" height="1.8" fill="rgb(240,240,240)"/>
<rect x="697.4" y="413.9" width="1.8" height="1.8" fill="rgb(255,255,255)"/>
<rect x="697.6" y="418.1" width="1.8" height="1.8" fill="rgb(255,255,255)"/>
<rect x="697.5" y="435.5" width="1.8" height="1.8" fill="rgb(255,255,255)"/>
<rect x="696.7" y="439.2" width="1.8" height="1.8" fill="rgb(255,255,255)"/>
<rect x="697.7" y="457.2" width="1.8" height="1.8" fill="rgb(110,110,110)"/>
<rect x="697.2" y="467.3" width="1.8" height="1.8" fill="rgb(170,170,170)"/>
<rect x="697.9" y="470.8" width="1.8" height="1.8" fill="rgb(140,140,140)"/>
<rect x="696.8" y="478.5" width="1.8" height="1.8" fill="rgb(170,170,170)"/>
<rect x="698.1" y="485.7" width="1.8" height="1.8" fill="rgb(255,255,255)"/>
<rect x="697.5" y="488.4" width="1.8" height="1.8" fill="rgb(240,240,240)"/>
<rect x="697.1" y="492.0" width="1.8" height="1.8" fill="rgb(255,255,255)"/>
<rect x="697.1" y="519.7" width="1.8" height="1.8" fill="rgb(255,255,255)"/>
<rect x="697.6" y="527.4" width="1.8" height="1.8" fill="rgb(170,170,170)"/>
<rect x="697.3" y="530.6" width="1.8" height="1.8" fill="rgb(250,250,250)"/>
<rect x="697.0" y="534.9" width="1.8" height="1.8" fill="rgb(140,140,140)"/>
<rect x="696.8" y="538.4" width="1.8" height="1.8" fill="rgb(110,110,110)"/>
<rect x="696.8" y="542.0" width="1.8" height="1.8" fill="rgb(170,170,170)"/>
<rect x="697.8" y="552.2" width="1.8" height="1.8" fill="rgb(255,255,255)"/>
<rect x="697.4" y="555.1" width="1.8" height="1.8" fill="rgb(110,110,110)"/>
<rect x="697.5" y="572.8" width="1.8" height="1.8" fill="rgb(250,250,250)"/>
<rect x="697.4" y="576.2" width="1.8" height="1.8" fill="rgb(240,240,240)"/>
<rect x="701.3" y="399.6" width="1.8" height="1.8" fill="rgb(255,255,255)"/>
<rect x="701.3" y="410.3" width="1.8" height="1.8" fill="rgb(70,70,70)"/>
<rect x="700.5" y="418.2" width="1.8" height="1.8" fill="rgb(255,255,255)"/>
<rect x="701.0" y="428.4" width="1.8" height="1.8" fill="rgb(255,255,255)"/>
<rect x="701.4" y="439.1" width="1.8" height="1.8" fill="rgb(255,255,255)"/>
<rect x="700.7" y="445.3" width="1.8" height="1.8" fill="rgb(110,110,110)"/>
<rect x="701.3" y="449.0" width="1.8" height="1.8" fill="rgb(255,255,255)"/>
<rect x="700.5" y="457.0" width="1.8" height="1.8" fill="rgb(70,70,70)"/>
<rect x="701.5" y="459.7" width="1.8" height="1.8" fill="rgb(250,250,250)"/>
<rect x="700.1" y="467.9" width="1.8" height="1.8" fill="rgb(110,110,110)"/>
<rect x="700.3" y="477.5" width="1.8" height="1.8" fill="rgb(110,110,110)"/>
<rect x="701.5" y="485.1" width="1.8" height="1.8" fill="rgb(255,255,255)"/>
<rect x="701.4" y="488.3" width="1.8" height="1.8" fill="rgb(255,255,255)"/>
<rect x="701.1" y="498.4" width="1.8" height="1.8" fill="rgb(140,140,140)"/>
<rect x="701.3" y="513.4" width="1.8" height="1.8" fill="rgb(255,255,255)"/>
<rect x="701.7" y="530.4" width="1.8" height="1.8" fill="rgb(250,250,250)"/>
<rect x="701.3" y="538.4" width="1.8" height="1.8" fill="rgb(255,255,255)"/>
<rect x="700.6" y="548.6" width="1.8" height="1.8" fill="rgb(240,240,240)"/>
<rect x="700.4" y="551.9" width="1.8" height="1.8" fill="rgb(240,240,240)"/>
<rect x="701.7" y="562.2" width="1.8" height="1.8" fill="rgb(240,240,240)"/>
<rect x="703.9" y="414.1" width="1.8" height="1.8" fill="rgb(70,70,70)"/>
<rect x="704.8" y="418.0" width="1.8" height="1.8" fill="rgb(255,255,255)"/>
<rect x="703.9" y="420.7" width="1.8" height="1.8" fill="rgb(70,70,70)"/>
<rect x="705.0" y="425.5" width="1.8" height="1.8" fill="rgb(170,170,170)"/>
<rect x="704.5" y="427.7" width="1.8" height="1.8" fill="rgb(255,255,255)"/>
<rect x="704.0" y="443.0" width="1.8" height="1.8" fill="rgb(70,70,70)"/>
<rect x="705.1" y="446.7" width="1.8" height="1.8" fill="rgb(170,170,170)"/>
<rect x="704.7" y="456.3" width="1.8" height="1.8" fill="rgb(140,140,140)"/>
<rect x="704.0" y="471.6" width="1.8" height="1.8" fill="rgb(170,170,170)"/>
<rect x="704.6" y="478.5" width="1.8" height="1.8" fill="rgb(255,255,255)"/>
<rect x="704.5" y="492.4" width="1.8" height="1.8" fill="rgb(255,255,255)"/>
<rect x="705.2" y="496.0" width="1.8" height="1.8" fill="rgb(255,255,255)"/>
<rect x="704.2" y="510.3" width="1.8" height="1.8" fill="rgb(170,170,170)"/>
<rect x="705.1" y="517.6" width="1.8" height="1.8" fill="rgb(110,110,110)"/>
<rect x="703.9" y="538.5" width="1.8" height="1.8" fill="rgb(255,255,255)"/>
<rect x="703.8" y="548.6" width="1.8" height="1.8" fill="rgb(140,140,140)"/>
<rect x="704.0" y="559.5" width="1.8" height="1.8" fill="rgb(240,240,240)"/>
<rect x="704.1" y="569.4" width="1.8" height="1.8" fill="rgb(250,250,250)"/>
<rect x="704.7" y="577.2" width="1.8" height="1.8" fill="rgb(255,255,255)"/>
<rect x="708.0" y="403.8" width="1.8" height="1.8" fill="rgb(255,255,255)"/>
<rect x="708.8" y="407.8" width="1.8" height="1.8" fill="rgb(170,170,170)"/>
<rect x="707.5" y="410.2" width="1.8" height="1.8" fill="rgb(255,255,255)"/>
<rect x="707.6" y="417.9" width="1.8" height="1.8" fill="rgb(110,110,110)"/>
<rect x="708.5" y="420.9" width="1.8" height="1.8" fill="rgb(255,255,255)"/>
<rect x="707.7" y="453.7" width="1.8" height="1.8" fill="rgb(250,250,250)"/>
<rect x="708.8" y="460.8" width="1.8" height="1.8" fill="rgb(255,255,255)"/>
<rect x="707.4" y="466.6" width="1.8" height="1.8" fill="rgb(255,255,255)"/>
<rect x="708.1" y="482.2" width="1.8" height="1.8" fill="rgb(110,110,110)"/>
<rect x="708.4" y="484.2" width="1.8" height="1.8" fill="rgb(255,255,255)"/>
<rect x="708.3" y="509.5" width="1.8" height="1.8" fill="rgb(255,255,255)"/>
<rect x="708.2" y="524.1" width="1.8" height="1.8" fill="rgb(250,250,250)"/>
<rect x="708.1" y="530.2" width="1.8" height="1.8" fill="rgb(240,240,240)"/>
<rect x="708.0" y="535.2" width="1.8" height="1.8" fill="rgb(70,70,70)"/>
<rect x="707.5" y="541.7" width="1.8" height="1.8" fill="rgb(240,240,240)"/>
<rect x="708.0" y="558.5" width="1.8" height="1.8" fill="rgb(110,110,110)"/>
<rect x="708.4" y="563.6" width="1.8" height="1.8" fill="rgb(110,110,110)"/>
<rect x="708.3" y="569.2" width="1.8" height="1.8" fill="rgb(170,170,170)"/>
<rect x="711.2" y="402.9" width="1.8" height="1.8" fill="rgb(255,255,255)"/>
<rect x="711.3" y="413.9" width="1.8" height="1.8" fill="rgb(255,255,255)"/>
<rect x="711.5" y="424.7" width="1.8" height="1.8" fill="rgb(170,170,170)"/>
<rect x="710.9" y="436.0" width="1.8" height="1.8" fill="rgb(70,70,70)"/>
<rect x="712.2" y="457.2" width="1.8" height="1.8" fill="rgb(240,240,240)"/>
<rect x="711.7" y="466.6" width="1.8" height="1.8" fill="rgb(140,140,140)"/>
<rect x="711.0" y="478.3" width="1.8" height="1.8" fill="rgb(255,255,255)"/>
<rect x="712.1" y="496.4" width="1.8" height="1.8" fill="rgb(170,170,170)"/>
<rect x="711.3" y="506.2" width="1.8" height="1.8" fill="rgb(255,255,255)"/>
<rect x="710.9" y="509.2" width="1.8" height="1.8" fill="rgb(170,170,170)"/>
<rect x="712.2" y="527.8" width="1.8" height="1.8" fill="rgb(140,140,140)"/>
<rect x="711.9" y="541.9" width="1.8" height="1.8" fill="rgb(255,255,255)"/>
<rect x="712.1" y="562.9" width="1.8" height="1.8" fill="rgb(110,110,110)"/>
<rect x="711.7" y="566.1" width="1.8" height="1.8" fill="rgb(70,70,70)"/>
<rect x="714.3" y="400.0" width="1.8" height="1.8" fill="rgb(255,255,255)"/>
<rect x="715.2" y="403.5" width="1.8" height="1.8" fill="rgb(140,140,140)"/>
<rect x="715.0" y="424.2" width="1.8" height="1.8" fill="rgb(70,70,70)"/>
<rect x="715.1" y="435.1" width="1.8" height="1.8" fill="rgb(240,240,240)"/>
<rect x="715.7" y="442.5" width="1.8" height="1.8" fill="rgb(255,255,255)"/>
<rect x="714.4" y="446.3" width="1.8" height="1.8" fill="rgb(250,250,250)"/>
<rect x="715.8" y="460.2" width="1.8" height="1.8" fill="rgb(255,255,255)"/>
<rect x="715.7" y="467.3" width="1.8" height="1.8" fill="rgb(255,255,255)"/>
<rect x="714.5" y="474.5" width="1.8" height="1.8" fill="rgb(255,255,255)"/>
<rect x="714.5" y="480.9" width="1.8" height="1.8" fill="rgb(110,110,110)"/>
<rect x="715.8" y="484.5" width="1.8" height="1.8" fill="rgb(255,255,255)"/>
<rect x="714.4" y="487.9" width="1.8" height="1.8" fill="rgb(140,140,140)"/>
<rect x="715.1" y="495.5" width="1.8" height="1.8" fill="rgb(255,255,255)"/>
<rect x="714.5" y="503.2" width="1.8" height="1.8" fill="rgb(255,255,255)"/>
<rect x="715.4" y="510.1" width="1.8" height="1.8" fill="rgb(170,170,170)"/>
<rect x="715.0" y="534.6" width="1.8" height="1.8" fill="rgb(255,255,255)"/>
<rect x="714.6" y="566.9" width="1.8" height="1.8" fill="rgb(140,140,140)"/>
<rect x="715.3" y="577.4" width="1.8" height="1.8" fill="rgb(110,110,110)"/>
<rect x="718.1" y="400.7" width="1.8" height="1.8" fill="rgb(240,240,240)"/>
<rect x="718.4" y="417.6" width="1.8" height="1.8" fill="rgb(240,240,240)"/>
<rect x="718.3" y="421.4" width="1.8" height="1.8" fill="rgb(240,240,240)"/>
<rect x="718.8" y="428.8" width="1.8" height="1.8" fill="rgb(140,140,140)"/>
<rect x="719.3" y="431.7" width="1.8" height="1.8" fill="rgb(70,70,70)"/>
<rect x="717.9" y="442.2" width="1.8" height="1.8" fill="rgb(170,170,170)"/>
<rect x="719.3" y="464.2" width="1.8" height="1.8" fill="rgb(140,140,140)"/>
<rect x="719.0" y="467.8" width="1.8" height="1.8" fill="rgb(70,70,70)"/>
<rect x="718.3" y="470.3" width="1.8" height="1.8" fill="rgb(255,255,255)"/>
<rect x="719.2" y="474.7" width="1.8" height="1.8" fill="rgb(255,255,255)"/>
<rect x="719.2" y="477.5" width="1.8" height="1.8" fill="rgb(140,140,140)"/>
<rect x="718.5" y="485.0" width="1.8" height="1.8" fill="rgb(255,255,255)"/>
<rect x="718.6" y="499.5" width="1.8" height="1.8" fill="rgb(255,255,255)"/>
<rect x="717.9" y="509.7" width="1.8" height="1.8" fill="rgb(255,255,255)"/>
<rect x="718.0" y="513.1" width="1.8" height="1.8" fill="rgb(255,255,255)"/>
<rect x="719.1" y="531.8" width="1.8" height="1.8" fill="rgb(170,170,170)"/>
<rect x="719.0" y="534.0" width="1.8" height="1.8" fill="rgb(110,110,110)"/>
<rect x="718.6" y="541.3" width="1.8" height="1.8" fill="rgb(255,255,255)"/>
<rect x="718.4" y="545.0" width="1.8" height="1.8" fill="rgb(255,255,255)"/>
<rect x="719.3" y="559.6" width="1.8" height="1.8" fill="rgb(140,140,140)"/>
<rect x="718.2" y="573.5" width="1.8" height="1.8" fill="rgb(110,110,110)"/>
<rect x="722.0" y="402.8" width="1.8" height="1.8" fill="rgb(110,110,110)"/>
<rect x="721.8" y="406.6" width="1.8" height="1.8" fill="rgb(70,70,70)"/>
<rect x="722.3" y="413.9" width="1.8" height="1.8" fill="rgb(170,170,170)"/>
<rect x="721.5" y="420.9" width="1.8" height="1.8" fill="rgb(140,140,140)"/>
<rect x="722.3" y="435.6" width="1.8" height="1.8" fill="rgb(255,255,255)"/>
<rect x="721.7" y="438.5" width="1.8" height="1.8" fill="rgb(255,255,255)"/>
<rect x="722.5" y="446.0" width="1.8" height="1.8" fill="rgb(255,255,255)"/>
<rect x="722.4" y="449.7" width="1.8" height="1.8" fill="rgb(255,255,255)"/>
<rect x="722.9" y="452.5" width="1.8" height="1.8" fill="rgb(255,255,255)"/>
<rect x="721.7" y="455.9" width="1.8" height="1.8" fill="rgb(110,110,110)"/>
<rect x="721.7" y="467.8" width="1.8" height="1.8" fill="rgb(240,240,240)"/>
<rect x="722.4" y="474.9" width="1.8" height="1.8" fill="rgb(255,255,255)"/>
<rect x="721.4" y="478.4" width="1.8" height="1.8" fill="rgb(140,140,140)"/>
<rect x="722.7" y="491.5" width="1.8" height="1.8" fill="rgb(110,110,110)"/>
<rect x="722.0" y="506.5" width="1.8" height="1.8" fill="rgb(110,110,110)"/>
<rect x="722.2" y="524.2" width="1.8" height="1.8" fill="rgb(255,255,255)"/>
<rect x="721.4" y="533.8" width="1.8" height="1.8" fill="rgb(255,255,255)"/>
<rect x="721.8" y="541.9" width="1.8" height="1.8" fill="rgb(170,170,170)"/>
<rect x="722.4" y="545.0" width="1.8" height="1.8" fill="rgb(240,240,240)"/>
<rect x="722.9" y="549.3" width="1.8" height="1.8" fill="rgb(70,70,70)"/>
<rect x="722.5" y="556.5" width="1.8" height="1.8" fill="rgb(110,110,110)"/>
<rect x="721.7" y="562.8" width="1.8" height="1.8" fill="rgb(240,240,240)"/>
<rect x="722.6" y="566.4" width="1.8" height="1.8" fill="rgb(255,255,255)"/>
<rect x="722.9" y="577.6" width="1.8" height="1.8" fill="rgb(140,140,140)"/>
<path d="M606 437 L613 435 L637 492 L630 495 Z" fill="#f4f4f4" opacity="0.9"/>
<path d="M704 437 L697 435 L673 492 L680 495 Z" fill="#f4f4f4" opacity="0.9"/>
</g>
<path d="M654.9 403.6 C657.6 404.4 660.7 409.2 663.3 412.0 C665.9 414.8 666.7 418.7 670.5 420.5 C674.3 422.3 681.7 421.6 686.3 423.0 C690.9 424.4 694.7 426.6 698.3 429.0 C701.9 431.4 705.4 434.3 708.0 437.5 C710.6 440.7 712.4 444.1 714.0 448.3 C715.6 452.5 716.8 458.0 717.7 462.8 C718.6 467.6 719.0 472.8 719.5 477.3 C720.0 481.8 720.3 485.9 720.5 490.0 C720.7 494.1 720.8 498.3 720.5 502.0 C720.2 505.7 719.6 508.2 718.5 512.0 C717.4 515.8 715.4 520.1 714.0 525.0 C712.6 529.9 712.1 536.9 710.4 541.4 C708.6 545.9 706.0 548.9 703.5 552.0 C701.0 555.1 698.5 557.6 695.6 560.2 C692.7 562.8 689.1 565.5 686.0 567.5 C682.9 569.5 680.6 570.6 676.8 572.2 C673.0 573.8 667.5 576.1 663.0 577.0 C658.5 577.9 655.3 578.6 650.0 577.8 C644.7 577.0 636.1 574.0 631.4 572.2 C626.7 570.4 624.9 569.0 622.0 567.0 C619.1 565.0 616.6 562.7 613.9 560.2 C611.2 557.7 608.0 554.7 606.0 552.0 C604.0 549.3 603.2 547.7 601.8 544.0 C600.4 540.3 598.5 534.0 597.5 530.0 C596.5 526.0 596.8 523.3 595.5 520.0 C594.2 516.7 591.4 513.3 590.0 510.0 C588.6 506.7 587.7 503.3 587.3 500.0 C586.9 496.7 587.1 494.6 587.5 490.0 C587.9 485.4 589.0 477.4 589.7 472.5 C590.4 467.6 590.7 464.4 591.5 460.4 C592.3 456.4 593.2 451.9 594.5 448.3 C595.8 444.7 596.9 441.9 599.3 438.7 C601.7 435.5 605.6 431.7 609.0 429.0 C612.4 426.3 615.3 423.9 619.9 422.4 C624.5 420.9 633.4 421.3 636.8 420.0 C640.2 418.7 638.7 416.7 640.4 414.5 C642.1 412.3 644.6 408.8 647.0 407.0 C649.4 405.2 652.2 402.8 654.9 403.6 Z" fill="none" stroke="#f7f7f7" stroke-width="11" clip-path="url(#headclip)"/>
<path d="M654.9 403.6 C657.6 404.4 660.7 409.2 663.3 412.0 C665.9 414.8 666.7 418.7 670.5 420.5 C674.3 422.3 681.7 421.6 686.3 423.0 C690.9 424.4 694.7 426.6 698.3 429.0 C701.9 431.4 705.4 434.3 708.0 437.5 C710.6 440.7 712.4 444.1 714.0 448.3 C715.6 452.5 716.8 458.0 717.7 462.8 C718.6 467.6 719.0 472.8 719.5 477.3 C720.0 481.8 720.3 485.9 720.5 490.0 C720.7 494.1 720.8 498.3 720.5 502.0 C720.2 505.7 719.6 508.2 718.5 512.0 C717.4 515.8 715.4 520.1 714.0 525.0 C712.6 529.9 712.1 536.9 710.4 541.4 C708.6 545.9 706.0 548.9 703.5 552.0 C701.0 555.1 698.5 557.6 695.6 560.2 C692.7 562.8 689.1 565.5 686.0 567.5 C682.9 569.5 680.6 570.6 676.8 572.2 C673.0 573.8 667.5 576.1 663.0 577.0 C658.5 577.9 655.3 578.6 650.0 577.8 C644.7 577.0 636.1 574.0 631.4 572.2 C626.7 570.4 624.9 569.0 622.0 567.0 C619.1 565.0 616.6 562.7 613.9 560.2 C611.2 557.7 608.0 554.7 606.0 552.0 C604.0 549.3 603.2 547.7 601.8 544.0 C600.4 540.3 598.5 534.0 597.5 530.0 C596.5 526.0 596.8 523.3 595.5 520.0 C594.2 516.7 591.4 513.3 590.0 510.0 C588.6 506.7 587.7 503.3 587.3 500.0 C586.9 496.7 587.1 494.6 587.5 490.0 C587.9 485.4 589.0 477.4 589.7 472.5 C590.4 467.6 590.7 464.4 591.5 460.4 C592.3 456.4 593.2 451.9 594.5 448.3 C595.8 444.7 596.9 441.9 599.3 438.7 C601.7 435.5 605.6 431.7 609.0 429.0 C612.4 426.3 615.3 423.9 619.9 422.4 C624.5 420.9 633.4 421.3 636.8 420.0 C640.2 418.7 638.7 416.7 640.4 414.5 C642.1 412.3 644.6 408.8 647.0 407.0 C649.4 405.2 652.2 402.8 654.9 403.6 Z" fill="none" stroke="#9a9a9a" stroke-width="1.2"/>
<path d="M716 504 L722 503 L727 512 L733.5 525 L731 529 L724 519 L716 516 Z" fill="#b0b0b0"/>
<path d="M592 504 L584 503 L581 512 L577.3 525 L579.8 529 L586 519 L594 516 Z" fill="#b0b0b0"/>
<path d="M724 510 L732 527" stroke="#fafafa" stroke-width="2.6" stroke-linecap="round"/>
<path d="M583 512 L578.5 527" stroke="#fafafa" stroke-width="2.6" stroke-linecap="round"/>
<path d="M655.4 404.5 C650 410 646 418 645 428 L646 468 L665.5 468 L666 428 C664 418 661 410 655.4 404.5 Z" fill="#f6f6f6"/>
<line x1="650.5" y1="418" x2="650.5" y2="462" stroke="#888" stroke-width="1"/>
<line x1="660.5" y1="418" x2="660.5" y2="462" stroke="#888" stroke-width="1"/>
<ellipse cx="636" cy="451.5" rx="7" ry="11.2" fill="#040404"/>
<path d="M668 440 L690 439.5 C688 448 680 458 670 463 Z" fill="#040404"/>
<path d="M646 467 L666 467 L666 482 C666 488 662 491 656 491 C650 491 646 488 646 482 Z" fill="#070707"/>
<rect x="651.5" y="466" width="9" height="9" rx="1" fill="#f4f4f4"/>
<circle cx="615" cy="459" r="2.3" fill="#1a1a1a"/>
<circle cx="694.7" cy="462.8" r="2.3" fill="#1a1a1a"/>
<ellipse cx="616" cy="510" rx="4" ry="2.5" fill="#222"/>
<ellipse cx="682" cy="506" rx="2.5" ry="2" fill="#333"/>
<ellipse cx="694.6" cy="511" rx="3" ry="2.5" fill="#333"/>
<rect x="703.5" y="519" width="5.5" height="7" fill="#151515"/>
<rect x="612" y="502" width="90" height="9" fill="#7a7a7a" opacity="0.25"/>
<circle cx="654.8" cy="527.9" r="8.7" fill="none" stroke="#4a4a4a" stroke-width="6.3"/>
<circle cx="654.8" cy="527.9" r="5.6" fill="#999999"/>
<ellipse cx="689.7" cy="524.8" rx="12" ry="8.4" fill="none" stroke="#ff0000" stroke-width="2.4"/>
<rect x="722" y="364" width="50" height="25" fill="#fdeeee"/>
<text x="726.60" y="381.90" font-size="12.9" text-anchor="start" fill="#ff0000" font-weight="bold" font-family='"Liberation Sans", sans-serif' >ML22a</text>
</svg></body></html>
